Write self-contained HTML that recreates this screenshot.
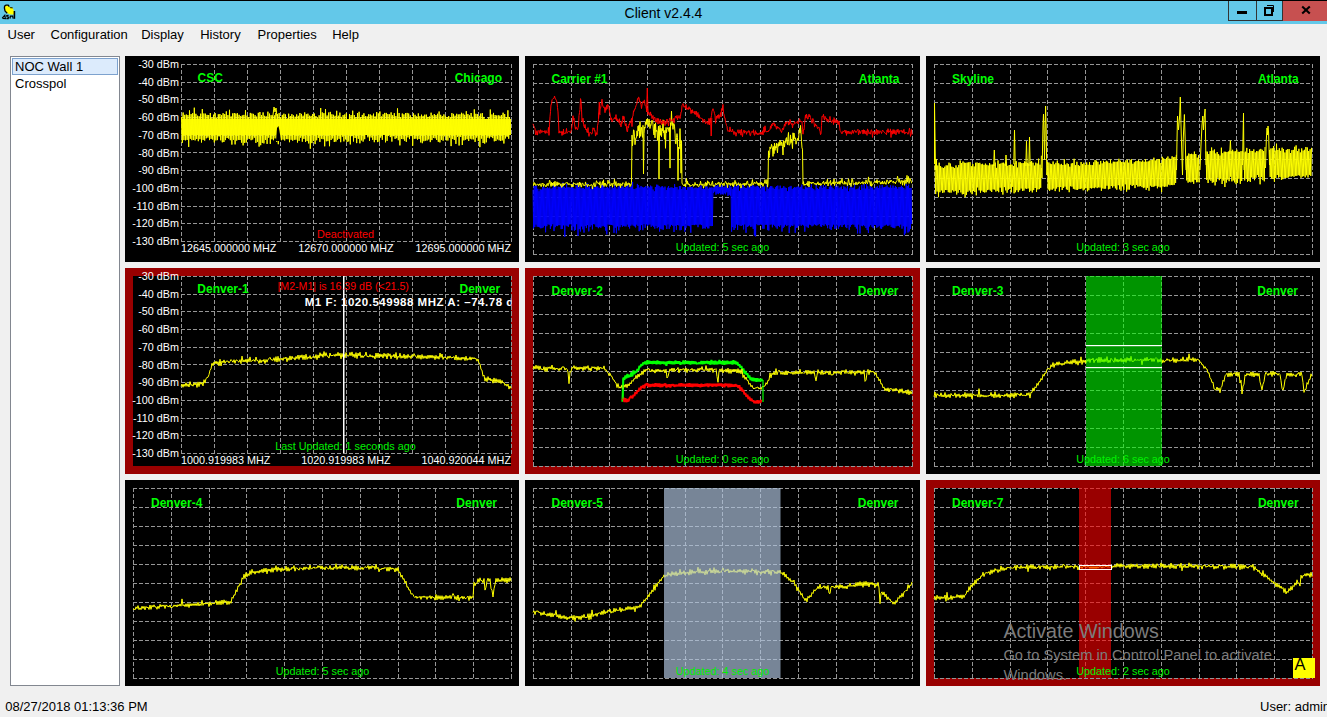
<!DOCTYPE html>
<html><head><meta charset="utf-8"><style>
html,body{margin:0;padding:0;}
body{width:1327px;height:717px;position:relative;overflow:hidden;background:#f0f0f0;font-family:"Liberation Sans",sans-serif;}
.tb{position:absolute;left:0;top:0;width:1327px;height:24px;background:#63c8e9;border-top:1px solid #000;box-sizing:border-box;}
.title{position:absolute;left:0;width:1327px;top:5px;text-align:center;font-size:14px;color:#000;line-height:16px;}
.btns{position:absolute;left:1228px;top:1px;height:20px;}
.b{position:absolute;top:0;height:20px;box-sizing:border-box;}
.menu{position:absolute;top:27.5px;font-size:13px;color:#000;line-height:13px;white-space:nowrap;}
.list{position:absolute;left:10px;top:56px;width:110px;height:630px;background:#fff;border:1px solid #828790;box-sizing:border-box;}
.sel{position:absolute;left:1px;top:1px;width:106px;height:17px;background:#dcebfc;border:1px solid #7da2ce;box-sizing:border-box;}
.li{position:absolute;left:4px;font-size:13px;line-height:13px;color:#000;}
svg.p{position:absolute;display:block;}
.lb{font-family:"Liberation Sans",sans-serif;font-weight:bold;font-size:12px;fill:#00ff00;}
.ax{font-family:"Liberation Sans",sans-serif;font-size:10.8px;fill:#fff;}
.up{font-family:"Liberation Sans",sans-serif;font-size:10.8px;fill:#00f000;}
.mk{font-family:"Liberation Sans",sans-serif;font-weight:bold;font-size:11.5px;letter-spacing:0.52px;fill:#fff;}
.wm1{font-family:"Liberation Sans",sans-serif;font-size:19.7px;fill:#7c7c7c;}
.wm2{font-family:"Liberation Sans",sans-serif;font-size:14.7px;fill:#7c7c7c;}
.akey{font-family:"Liberation Sans",sans-serif;font-size:16.5px;fill:#000;}
.status{position:absolute;top:700px;font-size:13px;line-height:13px;color:#000;white-space:nowrap;}
</style></head><body>
<div class="tb"></div>
<svg style="position:absolute;left:0px;top:0px" width="20" height="22" viewBox="0 0 20 22">
<path d="M4.6,6.2 L6,5.1 L8.2,5.2 L9.4,6.8 L12.4,7.4 L13.8,10.5 L14.4,14.6 L10.5,14.6 L7,13 L4.8,10.8 L4.3,8 Z" fill="#ffff00" stroke="none"/>
<path d="M7.2,13.2 L5,11 L4.4,8 L4.6,6.2 L6,5.1 L8.2,5.1 L9.3,6.6" fill="none" stroke="#000" stroke-width="1.3"/>
<path d="M9.5,7.3 L12.3,7.3 L13,8.3 L10.5,8.3 Z" fill="#000"/>
<path d="M14.4,11 L14.4,18.8" fill="none" stroke="#000" stroke-width="1.6"/>
<path d="M2.2,18.2 L4.8,15.3 L5.4,18.6 L2.5,18.4 M8.6,15.4 L6.8,15.6 L7,16.8 L8.6,17.2 L8.2,18.6 L6.4,18.6 M10,18.6 L10.4,16.2 L12.6,16.2 L13.2,18.6" fill="none" stroke="#000" stroke-width="1.2"/>
</svg>
<div class="title">Client v2.4.4</div>
<div class="btns">
 <div class="b" style="left:0;width:29px;border:1px solid #333;border-top:none;background:#63c8e9"></div>
 <div class="b" style="left:29px;width:26px;border:1px solid #333;border-top:none;border-left:none;background:#63c8e9"></div>
 <div class="b" style="left:55px;width:44px;background:#c75050;"></div>
</div>
<div style="position:absolute;left:1237px;top:11px;width:10px;height:3px;background:#000"></div>
<svg style="position:absolute;left:1262px;top:4px" width="14" height="12" viewBox="0 0 14 12">
<rect x="3" y="4" width="7" height="7" fill="none" stroke="#000" stroke-width="2"/>
<path d="M5,1.5 L11.5,1.5 L11.5,8" fill="none" stroke="#000" stroke-width="1"/>
</svg>
<svg style="position:absolute;left:1300px;top:5px" width="12" height="10" viewBox="0 0 12 10">
<path d="M2.2,1.5 L9.8,8.5 M9.8,1.5 L2.2,8.5" stroke="#000" stroke-width="2.1"/>
</svg>
<div class="menu" style="left:7.5px">User</div>
<div class="menu" style="left:50.5px">Configuration</div>
<div class="menu" style="left:141.2px">Display</div>
<div class="menu" style="left:200.2px">History</div>
<div class="menu" style="left:257.5px">Properties</div>
<div class="menu" style="left:332.2px">Help</div>
<div class="list"><div class="sel"></div>
<div class="li" style="top:3px">NOC Wall 1</div>
<div class="li" style="top:19.5px">Crosspol</div>
</div>
<svg class="p" style="left:125px;top:56px" width="394" height="206" viewBox="125 56 394 206"><rect x="125" y="56" width="394" height="206" fill="#000"/><rect x="133" y="64" width="378" height="190" fill="#000"/><rect x="133" y="64" width="378" height="190" fill="#000"/><g stroke="#969696" stroke-width="1" stroke-dasharray="4 2" shape-rendering="crispEdges"><line x1="181.5" y1="64" x2="181.5" y2="242"/><line x1="214.5" y1="64" x2="214.5" y2="242"/><line x1="247.5" y1="64" x2="247.5" y2="242"/><line x1="280.5" y1="64" x2="280.5" y2="242"/><line x1="313.5" y1="64" x2="313.5" y2="242"/><line x1="346.5" y1="64" x2="346.5" y2="242"/><line x1="379.5" y1="64" x2="379.5" y2="242"/><line x1="412.5" y1="64" x2="412.5" y2="242"/><line x1="445.5" y1="64" x2="445.5" y2="242"/><line x1="478.5" y1="64" x2="478.5" y2="242"/><line x1="511.5" y1="64" x2="511.5" y2="242"/><line x1="181" y1="64.5" x2="512" y2="64.5"/><line x1="181" y1="82.5" x2="512" y2="82.5"/><line x1="181" y1="99.5" x2="512" y2="99.5"/><line x1="181" y1="117.5" x2="512" y2="117.5"/><line x1="181" y1="135.5" x2="512" y2="135.5"/><line x1="181" y1="152.5" x2="512" y2="152.5"/><line x1="181" y1="170.5" x2="512" y2="170.5"/><line x1="181" y1="188.5" x2="512" y2="188.5"/><line x1="181" y1="206.5" x2="512" y2="206.5"/><line x1="181" y1="223.5" x2="512" y2="223.5"/><line x1="181" y1="241.5" x2="512" y2="241.5"/></g><text x="179" y="68.0" class="ax" text-anchor="end">-30 dBm</text><text x="179" y="85.7" class="ax" text-anchor="end">-40 dBm</text><text x="179" y="103.4" class="ax" text-anchor="end">-50 dBm</text><text x="179" y="121.1" class="ax" text-anchor="end">-60 dBm</text><text x="179" y="138.8" class="ax" text-anchor="end">-70 dBm</text><text x="179" y="156.5" class="ax" text-anchor="end">-80 dBm</text><text x="179" y="174.2" class="ax" text-anchor="end">-90 dBm</text><text x="179" y="191.9" class="ax" text-anchor="end">-100 dBm</text><text x="179" y="209.6" class="ax" text-anchor="end">-110 dBm</text><text x="179" y="227.3" class="ax" text-anchor="end">-120 dBm</text><text x="179" y="245.0" class="ax" text-anchor="end">-130 dBm</text><rect x="181.5" y="119" width="329.5" height="16" fill="#f0f000"/><polyline fill="none" stroke="#ffff00" stroke-width="1" stroke-linejoin="bevel"  points="181.5,116.8 182.3,142.9 183.1,112.5 183.9,140.1 184.7,114.9 185.5,140.3 186.3,114.5 187.1,139.9 187.9,115.1 188.7,146.9 189.5,110.4 190.3,138.8 191.1,114.1 191.9,140.2 192.7,113.2 193.5,140.0 194.3,107.7 195.1,140.4 195.9,113.8 196.7,139.0 197.5,115.7 198.3,141.2 199.1,116.2 199.9,139.2 200.7,113.7 201.5,142.5 202.3,109.1 203.1,139.9 203.9,113.5 204.7,140.6 205.5,113.7 206.3,138.3 207.1,114.9 207.9,137.6 208.7,115.0 209.5,140.1 210.3,113.0 211.1,138.9 211.9,117.6 212.7,139.6 213.5,114.7 214.3,142.4 215.1,113.1 215.9,140.4 216.7,117.6 217.5,140.1 218.3,114.3 219.1,136.4 219.9,114.0 220.7,140.3 221.5,115.2 222.3,142.3 223.1,113.2 223.9,142.0 224.7,114.1 225.5,140.1 226.3,111.4 227.1,138.0 227.9,115.1 228.7,138.6 229.5,109.8 230.3,140.2 231.1,116.4 231.9,144.6 232.7,113.4 233.5,139.8 234.3,113.0 235.1,144.4 235.9,113.5 236.7,140.6 237.5,113.3 238.3,139.9 239.1,114.8 239.9,140.0 240.7,116.0 241.5,142.6 242.3,115.4 243.1,145.4 243.9,114.9 244.7,142.9 245.5,110.2 246.3,142.5 247.1,115.6 247.9,138.8 248.7,117.3 249.5,138.8 250.3,112.9 251.1,140.2 251.9,113.5 252.7,139.5 253.5,113.9 254.3,137.7 255.1,115.2 255.9,142.9 256.7,116.6 257.5,141.8 258.3,112.8 259.1,146.6 259.9,112.0 260.7,145.2 261.5,115.1 262.3,142.9 263.1,112.4 263.9,143.4 264.7,115.8 265.5,139.9 266.3,116.4 267.1,143.9 267.9,111.7 268.7,137.7 269.5,113.6 270.3,143.9 271.1,115.2 271.9,139.3 272.7,115.2 273.5,140.2 274.3,115.3 275.1,138.4 275.9,112.8 276.7,141.8 277.5,114.1 278.3,144.2 279.1,113.1 279.9,140.4 280.7,117.2 281.5,140.2 282.3,114.9 283.1,139.6 283.9,113.7 284.7,140.5 285.5,114.5 286.3,139.1 287.1,118.4 287.9,139.2 288.7,113.7 289.5,142.2 290.3,116.0 291.1,139.8 291.9,114.2 292.7,140.7 293.5,115.4 294.3,139.8 295.1,116.7 295.9,139.7 296.7,114.4 297.5,142.5 298.3,115.8 299.1,140.8 299.9,113.0 300.7,137.7 301.5,113.9 302.3,141.7 303.1,115.7 303.9,138.9 304.7,112.4 305.5,141.9 306.3,114.2 307.1,141.1 307.9,113.7 308.7,143.4 309.5,115.7 310.3,148.7 311.1,115.9 311.9,143.1 312.7,114.1 313.5,140.9 314.3,113.5 315.1,144.1 315.9,116.0 316.7,140.3 317.5,117.4 318.3,137.9 319.1,115.3 319.9,141.9 320.7,108.0 321.5,138.7 322.3,112.4 323.1,139.2 323.9,113.2 324.7,146.3 325.5,109.1 326.3,141.3 327.1,115.5 327.9,141.1 328.7,112.5 329.5,146.2 330.3,111.9 331.1,140.0 331.9,114.3 332.7,138.5 333.5,114.8 334.3,142.0 335.1,115.8 335.9,141.6 336.7,110.8 337.5,139.7 338.3,115.7 339.1,138.8 339.9,112.6 340.7,142.2 341.5,116.9 342.3,136.7 343.1,115.1 343.9,141.4 344.7,114.5 345.5,139.3 346.3,113.2 347.1,142.0 347.9,119.4 348.7,141.4 349.5,114.1 350.3,144.4 351.1,115.1 351.9,136.2 352.7,110.7 353.5,141.5 354.3,115.1 355.1,138.0 355.9,117.3 356.7,143.1 357.5,113.0 358.3,138.8 359.1,111.8 359.9,143.3 360.7,117.0 361.5,140.4 362.3,114.9 363.1,141.6 363.9,113.3 364.7,139.2 365.5,116.2 366.3,135.0 367.1,116.4 367.9,137.3 368.7,114.3 369.5,140.9 370.3,114.5 371.1,137.5 371.9,115.5 372.7,139.8 373.5,113.7 374.3,142.2 375.1,116.4 375.9,140.0 376.7,112.0 377.5,142.1 378.3,113.4 379.1,141.8 379.9,111.5 380.7,137.6 381.5,116.5 382.3,139.8 383.1,114.3 383.9,134.1 384.7,112.9 385.5,142.3 386.3,112.9 387.1,140.9 387.9,114.1 388.7,135.7 389.5,114.4 390.3,137.1 391.1,112.4 391.9,141.6 392.7,115.2 393.5,136.2 394.3,113.2 395.1,138.9 395.9,116.1 396.7,138.2 397.5,108.4 398.3,140.2 399.1,113.0 399.9,145.4 400.7,117.1 401.5,139.0 402.3,113.5 403.1,139.2 403.9,114.4 404.7,140.8 405.5,113.0 406.3,141.8 407.1,112.9 407.9,137.4 408.7,113.5 409.5,139.1 410.3,115.4 411.1,136.1 411.9,117.2 412.7,145.8 413.5,113.4 414.3,138.8 415.1,114.8 415.9,138.7 416.7,116.4 417.5,139.6 418.3,113.4 419.1,139.0 419.9,116.3 420.7,142.4 421.5,114.7 422.3,143.2 423.1,115.9 423.9,141.2 424.7,114.7 425.5,140.6 426.3,114.6 427.1,140.5 427.9,116.9 428.7,139.4 429.5,116.5 430.3,142.1 431.1,112.7 431.9,140.1 432.7,115.4 433.5,138.0 434.3,114.1 435.1,138.3 435.9,115.1 436.7,140.0 437.5,113.8 438.3,141.8 439.1,111.5 439.9,142.4 440.7,114.8 441.5,139.8 442.3,116.1 443.1,140.7 443.9,114.4 444.7,136.3 445.5,115.9 446.3,140.4 447.1,117.0 447.9,140.5 448.7,116.0 449.5,137.6 450.3,117.0 451.1,146.1 451.9,113.1 452.7,139.0 453.5,113.9 454.3,139.9 455.1,115.7 455.9,143.9 456.7,113.8 457.5,136.8 458.3,114.5 459.1,145.5 459.9,114.3 460.7,136.9 461.5,112.8 462.3,145.0 463.1,113.6 463.9,140.4 464.7,114.8 465.5,139.7 466.3,111.2 467.1,139.2 467.9,114.1 468.7,141.0 469.5,115.4 470.3,138.7 471.1,113.0 471.9,139.4 472.7,116.8 473.5,139.3 474.3,109.4 475.1,141.9 475.9,113.8 476.7,137.6 477.5,114.2 478.3,141.1 479.1,115.9 479.9,147.1 480.7,113.6 481.5,138.6 482.3,113.1 483.1,143.0 483.9,116.9 484.7,143.6 485.5,119.1 486.3,142.3 487.1,118.8 487.9,137.7 488.7,117.4 489.5,138.3 490.3,109.5 491.1,137.1 491.9,114.5 492.7,138.1 493.5,112.9 494.3,141.3 495.1,115.0 495.9,141.0 496.7,115.5 497.5,139.3 498.3,115.3 499.1,140.3 499.9,115.6 500.7,141.0 501.5,115.1 502.3,140.4 503.1,112.7 503.9,143.5 504.7,114.1 505.5,138.4 506.3,117.0 507.1,136.8 507.9,110.3 508.7,138.7 509.5,117.0 510.3,133.5"/><polyline fill="none" stroke="#ffff00" points="273,115 274,107 275,112 276,108 277,116"/><polygon fill="#000" points="276,141 277,128 278.5,126 279.5,131 281,141"/><text x="181" y="251.5" class="ax">12645.000000 MHZ</text><text x="346" y="251.5" class="ax" text-anchor="middle">12670.000000 MHZ</text><text x="511" y="251.5" class="ax" text-anchor="end">12695.000000 MHZ</text><text x="345.5" y="238" class="up" style="fill:#ff0000" text-anchor="middle">Deactivated</text><text x="197.6" y="81.5" class="lb">CSC</text><text x="502" y="81.5" class="lb" text-anchor="end">Chicago</text></svg>
<svg class="p" style="left:525px;top:56px" width="395" height="206" viewBox="525 56 395 206"><rect x="525" y="56" width="395" height="206" fill="#000"/><rect x="533" y="64" width="379" height="190" fill="#000"/><g stroke="#969696" stroke-width="1" stroke-dasharray="4 2" shape-rendering="crispEdges"><line x1="533.5" y1="64" x2="533.5" y2="255"/><line x1="571.5" y1="64" x2="571.5" y2="255"/><line x1="609.5" y1="64" x2="609.5" y2="255"/><line x1="647.5" y1="64" x2="647.5" y2="255"/><line x1="685.5" y1="64" x2="685.5" y2="255"/><line x1="722.5" y1="64" x2="722.5" y2="255"/><line x1="760.5" y1="64" x2="760.5" y2="255"/><line x1="798.5" y1="64" x2="798.5" y2="255"/><line x1="836.5" y1="64" x2="836.5" y2="255"/><line x1="874.5" y1="64" x2="874.5" y2="255"/><line x1="912.5" y1="64" x2="912.5" y2="255"/><line x1="533" y1="64.5" x2="913" y2="64.5"/><line x1="533" y1="83.5" x2="913" y2="83.5"/><line x1="533" y1="102.5" x2="913" y2="102.5"/><line x1="533" y1="121.5" x2="913" y2="121.5"/><line x1="533" y1="140.5" x2="913" y2="140.5"/><line x1="533" y1="159.5" x2="913" y2="159.5"/><line x1="533" y1="178.5" x2="913" y2="178.5"/><line x1="533" y1="197.5" x2="913" y2="197.5"/><line x1="533" y1="216.5" x2="913" y2="216.5"/><line x1="533" y1="235.5" x2="913" y2="235.5"/><line x1="533" y1="254.5" x2="913" y2="254.5"/></g><polyline fill="none" stroke="#0000ff" stroke-width="1" stroke-linejoin="bevel"  points="533.0,189.8 533.6,228.4 534.2,186.0 534.8,227.0 535.4,185.9 536.0,224.6 536.6,185.6 537.2,226.7 537.8,188.8 538.4,226.8 539.0,191.3 539.6,227.3 540.2,189.1 540.8,228.3 541.4,189.6 542.0,228.1 542.6,187.1 543.2,227.4 543.8,186.4 544.4,225.7 545.0,188.3 545.6,232.3 546.2,188.2 546.8,226.2 547.4,187.2 548.0,224.3 548.6,188.4 549.2,224.7 549.8,187.5 550.4,228.9 551.0,189.0 551.6,226.2 552.2,188.1 552.8,224.2 553.4,184.2 554.0,231.1 554.6,183.2 555.2,227.2 555.8,185.6 556.4,225.7 557.0,189.3 557.6,226.1 558.2,186.7 558.8,225.1 559.4,187.1 560.0,225.2 560.6,184.1 561.2,229.1 561.8,186.8 562.4,228.9 563.0,182.5 563.6,225.3 564.2,186.9 564.8,236.8 565.4,187.9 566.0,225.4 566.6,183.8 567.2,226.2 567.8,187.4 568.4,226.8 569.0,187.3 569.6,224.3 570.2,187.8 570.8,224.2 571.4,187.5 572.0,230.4 572.6,183.5 573.2,226.6 573.8,188.3 574.4,230.8 575.0,188.8 575.6,229.8 576.2,185.7 576.8,224.2 577.4,183.0 578.0,235.9 578.6,187.6 579.2,229.1 579.8,186.4 580.4,231.5 581.0,188.6 581.6,226.4 582.2,188.1 582.8,229.3 583.4,188.2 584.0,232.6 584.6,188.9 585.2,226.1 585.8,185.6 586.4,228.1 587.0,183.0 587.6,225.1 588.2,187.1 588.8,231.4 589.4,186.5 590.0,226.8 590.6,188.9 591.2,225.2 591.8,186.9 592.4,229.4 593.0,188.1 593.6,224.1 594.2,187.5 594.8,224.3 595.4,186.5 596.0,226.7 596.6,186.6 597.2,227.1 597.8,186.4 598.4,228.2 599.0,188.1 599.6,227.1 600.2,187.5 600.8,227.7 601.4,185.1 602.0,226.3 602.6,183.4 603.2,225.8 603.8,185.9 604.4,226.8 605.0,188.2 605.6,230.6 606.2,187.6 606.8,234.3 607.4,187.2 608.0,224.4 608.6,188.4 609.2,224.7 609.8,186.7 610.4,224.7 611.0,189.5 611.6,224.9 612.2,186.8 612.8,225.3 613.4,188.2 614.0,232.8 614.6,184.7 615.2,227.7 615.8,187.4 616.4,233.3 617.0,189.2 617.6,226.3 618.2,187.2 618.8,230.4 619.4,185.4 620.0,227.2 620.6,187.8 621.2,225.1 621.8,186.6 622.4,226.8 623.0,186.5 623.6,225.7 624.2,187.9 624.8,226.3 625.4,187.4 626.0,226.4 626.6,186.6 627.2,224.5 627.8,184.2 628.4,226.8 629.0,188.2 629.6,228.5 630.2,187.0 630.8,225.7 631.4,186.3 632.0,224.5 632.6,181.9 633.2,225.6 633.8,188.9 634.4,226.3 635.0,189.2 635.6,227.4 636.2,188.2 636.8,224.6 637.4,183.9 638.0,225.9 638.6,185.1 639.2,231.2 639.8,187.6 640.4,229.8 641.0,186.1 641.6,225.1 642.2,186.9 642.8,230.2 643.4,187.6 644.0,224.1 644.6,187.2 645.2,227.8 645.8,186.1 646.4,224.3 647.0,188.2 647.6,226.0 648.2,186.2 648.8,224.7 649.4,187.5 650.0,224.4 650.6,185.6 651.2,226.8 651.8,186.5 652.4,225.5 653.0,189.5 653.6,226.7 654.2,191.3 654.8,228.6 655.4,187.0 656.0,225.9 656.6,184.7 657.2,228.2 657.8,184.8 658.4,227.1 659.0,186.0 659.6,231.5 660.2,187.4 660.8,228.8 661.4,186.6 662.0,229.3 662.6,186.3 663.2,229.8 663.8,187.6 664.4,225.1 665.0,186.6 665.6,225.4 666.2,190.1 666.8,229.0 667.4,187.7 668.0,224.4 668.6,186.0 669.2,228.8 669.8,188.0 670.4,226.5 671.0,187.4 671.6,224.8 672.2,187.6 672.8,225.8 673.4,188.2 674.0,232.0 674.6,184.1 675.2,225.8 675.8,187.1 676.4,229.9 677.0,187.2 677.6,225.0 678.2,189.6 678.8,225.4 679.4,186.0 680.0,230.3 680.6,186.1 681.2,229.9 681.8,189.0 682.4,226.2 683.0,187.3 683.6,225.8 684.2,187.0 684.8,231.7 685.4,186.7 686.0,227.8 686.6,189.9 687.2,225.5 687.8,187.3 688.4,225.7 689.0,187.2 689.6,226.2 690.2,186.9 690.8,232.7 691.4,187.0 692.0,225.0 692.6,186.9 693.2,224.8 693.8,188.5 694.4,225.1 695.0,187.8 695.6,224.5 696.2,187.6 696.8,224.7 697.4,188.3 698.0,227.2 698.6,187.5 699.2,224.5 699.8,186.9 700.4,224.4 701.0,185.4 701.6,225.1 702.2,189.0 702.8,228.7 703.4,187.7 704.0,228.1 704.6,189.2 705.2,228.6 705.8,186.3 706.4,226.7 707.0,186.5 707.6,228.3 708.2,188.7 708.8,228.4 709.4,187.5 710.0,225.9 710.6,187.7 711.2,226.1 711.8,187.4 712.4,226.0 713.0,187.9 713.6,192.9 714.2,184.9 714.8,191.6 715.4,185.2 716.0,194.7 716.6,186.1 717.2,193.6 717.8,185.2 718.4,194.1 719.0,186.9 719.6,193.1 720.2,186.8 720.8,194.5 721.4,185.5 722.0,194.1 722.6,186.8 723.2,194.6 723.8,187.1 724.4,193.3 725.0,186.6 725.6,194.3 726.2,185.3 726.8,192.3 727.4,186.5 728.0,195.9 728.6,188.1 729.2,194.8 729.8,185.3 730.4,195.7 731.0,187.1 731.6,231.7 732.2,189.2 732.8,227.1 733.4,185.3 734.0,230.0 734.6,184.9 735.2,228.1 735.8,186.6 736.4,224.4 737.0,186.0 737.6,229.9 738.2,183.3 738.8,224.9 739.4,190.8 740.0,225.6 740.6,187.5 741.2,226.0 741.8,187.2 742.4,225.2 743.0,184.2 743.6,229.4 744.2,187.2 744.8,224.4 745.4,187.9 746.0,232.8 746.6,187.9 747.2,227.0 747.8,186.2 748.4,226.2 749.0,187.1 749.6,225.3 750.2,184.1 750.8,226.9 751.4,186.7 752.0,226.5 752.6,184.9 753.2,228.9 753.8,185.7 754.4,235.5 755.0,186.9 755.6,236.4 756.2,186.4 756.8,224.2 757.4,185.8 758.0,225.2 758.6,186.8 759.2,225.1 759.8,188.2 760.4,224.4 761.0,188.3 761.6,224.7 762.2,186.1 762.8,228.7 763.4,187.3 764.0,228.8 764.6,186.5 765.2,224.8 765.8,191.4 766.4,224.6 767.0,184.8 767.6,230.1 768.2,188.9 768.8,230.5 769.4,187.5 770.0,224.7 770.6,186.0 771.2,224.4 771.8,186.2 772.4,227.3 773.0,187.7 773.6,224.6 774.2,189.0 774.8,225.8 775.4,187.3 776.0,227.3 776.6,186.1 777.2,228.7 777.8,185.6 778.4,225.8 779.0,189.4 779.6,226.9 780.2,185.7 780.8,225.2 781.4,188.4 782.0,231.6 782.6,187.9 783.2,227.9 783.8,186.2 784.4,226.6 785.0,187.5 785.6,224.6 786.2,188.0 786.8,226.0 787.4,191.3 788.0,225.0 788.6,187.2 789.2,233.1 789.8,186.6 790.4,227.0 791.0,185.9 791.6,225.4 792.2,189.1 792.8,226.0 793.4,187.9 794.0,224.5 794.6,187.2 795.2,232.8 795.8,187.6 796.4,227.8 797.0,186.9 797.6,227.5 798.2,186.5 798.8,226.0 799.4,187.6 800.0,224.4 800.6,186.9 801.2,225.7 801.8,184.7 802.4,224.6 803.0,188.7 803.6,225.4 804.2,189.3 804.8,231.7 805.4,186.6 806.0,226.2 806.6,187.6 807.2,227.3 807.8,187.7 808.4,227.8 809.0,186.7 809.6,224.5 810.2,187.3 810.8,225.1 811.4,184.4 812.0,226.3 812.6,188.4 813.2,225.5 813.8,189.2 814.4,224.3 815.0,190.3 815.6,225.1 816.2,185.0 816.8,225.6 817.4,188.1 818.0,224.8 818.6,189.0 819.2,224.0 819.8,186.9 820.4,226.3 821.0,185.3 821.6,226.8 822.2,187.9 822.8,225.0 823.4,185.1 824.0,225.8 824.6,187.0 825.2,224.1 825.8,185.6 826.4,225.4 827.0,189.1 827.6,228.2 828.2,189.0 828.8,225.0 829.4,186.9 830.0,228.9 830.6,184.0 831.2,230.0 831.8,186.7 832.4,226.7 833.0,188.2 833.6,224.5 834.2,189.4 834.8,228.9 835.4,185.6 836.0,228.5 836.6,187.0 837.2,225.3 837.8,185.9 838.4,228.8 839.0,188.3 839.6,226.5 840.2,187.3 840.8,225.1 841.4,186.6 842.0,227.0 842.6,189.2 843.2,225.0 843.8,186.3 844.4,224.3 845.0,187.2 845.6,227.1 846.2,188.5 846.8,228.1 847.4,184.8 848.0,224.9 848.6,191.4 849.2,229.8 849.8,188.4 850.4,226.7 851.0,183.7 851.6,224.9 852.2,187.8 852.8,224.3 853.4,187.7 854.0,224.7 854.6,183.1 855.2,226.9 855.8,189.5 856.4,228.5 857.0,189.2 857.6,233.4 858.2,188.5 858.8,224.5 859.4,186.6 860.0,233.5 860.6,190.1 861.2,225.7 861.8,185.0 862.4,226.2 863.0,188.4 863.6,225.2 864.2,184.0 864.8,226.2 865.4,188.7 866.0,228.0 866.6,184.1 867.2,230.1 867.8,186.4 868.4,233.0 869.0,188.9 869.6,226.5 870.2,185.3 870.8,225.0 871.4,187.6 872.0,226.8 872.6,187.6 873.2,228.2 873.8,189.7 874.4,224.8 875.0,188.3 875.6,225.0 876.2,186.9 876.8,227.7 877.4,186.4 878.0,226.8 878.6,188.1 879.2,225.7 879.8,185.4 880.4,228.4 881.0,188.4 881.6,228.8 882.2,185.0 882.8,227.1 883.4,187.5 884.0,225.7 884.6,187.1 885.2,225.3 885.8,186.7 886.4,224.5 887.0,185.5 887.6,225.7 888.2,187.3 888.8,225.6 889.4,187.7 890.0,224.7 890.6,185.4 891.2,226.9 891.8,187.8 892.4,227.5 893.0,185.6 893.6,227.7 894.2,187.8 894.8,228.2 895.4,186.1 896.0,226.3 896.6,187.0 897.2,225.8 897.8,188.8 898.4,225.8 899.0,187.0 899.6,227.2 900.2,187.1 900.8,224.5 901.4,185.8 902.0,228.7 902.6,187.1 903.2,226.2 903.8,188.0 904.4,235.2 905.0,189.5 905.6,233.4 906.2,184.0 906.8,226.6 907.4,186.1 908.0,232.5 908.6,184.7 909.2,231.4 909.8,188.0 910.4,228.9 911.0,187.9 911.6,224.0"/><polyline fill="none" stroke="#ffff00" stroke-width="1" stroke-linejoin="bevel"  points="533.0,185.5 533.5,185.4 534.0,182.3 534.5,184.4 535.0,183.3 535.5,185.3 536.0,185.6 536.5,185.1 537.0,184.2 537.5,184.1 538.0,184.8 538.5,185.6 539.0,184.2 539.5,185.1 540.0,183.6 540.5,185.8 541.0,186.7 541.5,186.3 542.0,183.2 542.5,183.8 543.0,183.1 543.5,186.5 544.0,184.5 544.5,184.5 545.0,185.2 545.5,186.0 546.0,186.9 546.5,184.7 547.0,183.6 547.5,183.7 548.0,185.8 548.5,183.5 549.0,184.1 549.5,180.2 550.0,180.8 550.5,183.8 551.0,186.5 551.5,182.4 552.0,185.6 552.5,183.0 553.0,185.6 553.5,184.6 554.0,182.0 554.5,186.7 555.0,181.2 555.5,186.2 556.0,185.5 556.5,185.1 557.0,181.8 557.5,185.4 558.0,182.5 558.5,184.5 559.0,182.9 559.5,183.3 560.0,184.7 560.5,185.6 561.0,183.7 561.5,187.2 562.0,187.3 562.5,186.4 563.0,183.1 563.5,185.6 564.0,184.1 564.5,185.0 565.0,183.1 565.5,183.3 566.0,182.5 566.5,182.7 567.0,182.5 567.5,182.6 568.0,184.7 568.5,184.4 569.0,183.4 569.5,184.5 570.0,184.4 570.5,184.6 571.0,185.2 571.5,184.5 572.0,186.9 572.5,184.5 573.0,186.8 573.5,182.7 574.0,183.1 574.5,183.8 575.0,183.3 575.5,184.1 576.0,185.0 576.5,183.9 577.0,184.1 577.5,184.4 578.0,182.8 578.5,186.9 579.0,185.6 579.5,182.1 580.0,185.2 580.5,182.8 581.0,186.9 581.5,186.9 582.0,183.7 582.5,182.9 583.0,183.9 583.5,184.7 584.0,185.8 584.5,185.1 585.0,185.7 585.5,181.9 586.0,184.2 586.5,184.6 587.0,184.4 587.5,186.8 588.0,184.2 588.5,184.6 589.0,185.7 589.5,185.6 590.0,185.2 590.5,185.5 591.0,184.4 591.5,184.8 592.0,184.7 592.5,189.1 593.0,185.6 593.5,185.1 594.0,182.7 594.5,186.1 595.0,187.0 595.5,186.1 596.0,183.0 596.5,180.7 597.0,182.5 597.5,182.7 598.0,182.5 598.5,184.0 599.0,183.1 599.5,184.9 600.0,181.6 600.5,187.8 601.0,185.7 601.5,184.5 602.0,183.2 602.5,181.5 603.0,185.2 603.5,179.8 604.0,186.5 604.5,183.1 605.0,184.7 605.5,183.4 606.0,186.3 606.5,186.4 607.0,184.2 607.5,183.7 608.0,180.1 608.5,183.1 609.0,183.6 609.5,181.8 610.0,183.6 610.5,186.0 611.0,185.1 611.5,184.2 612.0,183.2 612.5,187.2 613.0,183.5 613.5,183.4 614.0,183.5 614.5,179.2 615.0,185.5 615.5,184.2 616.0,181.6 616.5,186.7 617.0,185.0 617.5,185.2 618.0,183.1 618.5,183.4 619.0,185.8 619.5,184.3 620.0,183.3 620.5,187.6 621.0,183.9 621.5,184.9 622.0,185.6 622.5,182.9 623.0,183.3 623.5,182.8 624.0,183.4 624.5,184.3 625.0,186.8 625.5,185.5 626.0,181.6 626.5,185.3 627.0,185.9 627.5,183.7 628.0,183.7 628.5,182.8 629.0,184.8 629.5,183.4 630.0,186.8 630.5,184.5 631.0,185.4 631.5,182.3 632.0,135.1 632.5,145.8 633.0,139.8 633.5,129.9 634.0,130.2 634.5,136.9 635.0,144.7 635.5,140.3 636.0,137.6 636.5,137.7 637.0,130.8 637.5,136.1 638.0,126.1 638.5,131.0 639.0,125.1 639.5,137.8 640.0,121.4 640.5,136.3 641.0,129.4 641.5,127.3 642.0,134.6 642.5,137.4 643.0,125.3 643.5,174.0 644.0,133.7 644.5,127.0 645.0,128.2 645.5,121.7 646.0,124.4 646.5,119.4 647.0,124.5 647.5,118.7 648.0,123.5 648.5,126.6 649.0,119.1 649.5,122.5 650.0,128.5 650.5,124.7 651.0,125.3 651.5,120.6 652.0,120.3 652.5,120.6 653.0,124.4 653.5,131.9 654.0,135.0 654.5,124.0 655.0,137.9 655.5,122.8 656.0,131.8 656.5,130.1 657.0,131.0 657.5,140.5 658.0,132.3 658.5,126.1 659.0,179.1 659.5,131.0 660.0,125.4 660.5,135.3 661.0,128.1 661.5,136.7 662.0,129.3 662.5,130.8 663.0,119.8 663.5,132.7 664.0,130.9 664.5,139.2 665.0,130.2 665.5,148.3 666.0,127.4 666.5,132.8 667.0,129.4 667.5,129.0 668.0,127.4 668.5,128.9 669.0,131.7 669.5,127.4 670.0,168.1 670.5,122.8 671.0,123.7 671.5,111.1 672.0,125.5 672.5,122.5 673.0,129.4 673.5,123.6 674.0,123.5 674.5,126.1 675.0,133.1 675.5,143.6 676.0,144.1 676.5,137.5 677.0,133.6 677.5,137.2 678.0,180.4 678.5,147.0 679.0,149.1 679.5,146.8 680.0,128.6 680.5,143.8 681.0,173.2 681.5,140.6 682.0,183.1 682.5,184.2 683.0,184.3 683.5,185.5 684.0,185.0 684.5,185.9 685.0,183.8 685.5,187.0 686.0,184.4 686.5,178.5 687.0,183.9 687.5,181.2 688.0,184.4 688.5,183.6 689.0,184.9 689.5,184.0 690.0,186.6 690.5,185.6 691.0,185.0 691.5,185.5 692.0,185.0 692.5,184.9 693.0,184.1 693.5,186.3 694.0,186.0 694.5,185.3 695.0,182.4 695.5,184.8 696.0,184.7 696.5,184.2 697.0,185.4 697.5,184.0 698.0,186.4 698.5,186.5 699.0,186.5 699.5,184.1 700.0,185.0 700.5,181.2 701.0,183.3 701.5,185.1 702.0,185.2 702.5,185.3 703.0,183.8 703.5,188.1 704.0,185.9 704.5,185.7 705.0,183.5 705.5,182.4 706.0,186.3 706.5,182.9 707.0,185.3 707.5,180.8 708.0,183.4 708.5,181.9 709.0,182.0 709.5,184.8 710.0,185.1 710.5,184.7 711.0,185.5 711.5,184.6 712.0,182.4 712.5,181.1 713.0,185.7 713.5,184.9 714.0,186.7 714.5,185.6 715.0,185.5 715.5,183.4 716.0,184.0 716.5,184.7 717.0,183.6 717.5,182.8 718.0,184.3 718.5,182.3 719.0,182.0 719.5,183.8 720.0,186.8 720.5,183.4 721.0,182.7 721.5,182.6 722.0,184.1 722.5,184.8 723.0,183.9 723.5,183.1 724.0,185.7 724.5,183.6 725.0,182.8 725.5,181.4 726.0,181.9 726.5,184.2 727.0,183.3 727.5,187.6 728.0,183.4 728.5,182.7 729.0,184.4 729.5,184.3 730.0,183.0 730.5,185.5 731.0,184.1 731.5,184.1 732.0,183.4 732.5,185.7 733.0,182.4 733.5,186.8 734.0,184.5 734.5,184.3 735.0,180.4 735.5,183.5 736.0,182.5 736.5,185.9 737.0,184.1 737.5,184.1 738.0,184.9 738.5,182.7 739.0,183.8 739.5,185.7 740.0,183.9 740.5,183.6 741.0,188.1 741.5,185.5 742.0,183.9 742.5,184.1 743.0,184.1 743.5,184.5 744.0,183.1 744.5,185.8 745.0,183.2 745.5,183.6 746.0,185.2 746.5,183.0 747.0,181.5 747.5,180.9 748.0,184.4 748.5,184.6 749.0,184.3 749.5,187.2 750.0,183.9 750.5,184.2 751.0,185.9 751.5,184.3 752.0,182.0 752.5,179.6 753.0,185.1 753.5,183.8 754.0,183.0 754.5,182.2 755.0,183.7 755.5,183.2 756.0,182.9 756.5,181.5 757.0,183.6 757.5,182.7 758.0,184.9 758.5,183.0 759.0,185.8 759.5,183.2 760.0,182.8 760.5,183.9 761.0,182.0 761.5,184.8 762.0,183.0 762.5,184.9 763.0,186.4 763.5,183.6 764.0,183.6 764.5,183.2 765.0,179.6 765.5,182.9 766.0,183.8 766.5,183.6 767.0,179.5 767.5,187.1 768.0,183.5 768.5,150.8 769.0,157.7 769.5,155.6 770.0,146.9 770.5,148.9 771.0,148.1 771.5,144.3 772.0,146.2 772.5,147.7 773.0,156.4 773.5,146.5 774.0,153.7 774.5,143.0 775.0,150.4 775.5,146.5 776.0,148.0 776.5,143.2 777.0,148.8 777.5,152.9 778.0,143.7 778.5,146.3 779.0,142.3 779.5,145.6 780.0,140.1 780.5,142.4 781.0,145.7 781.5,141.9 782.0,143.0 782.5,146.7 783.0,155.0 783.5,140.6 784.0,144.1 784.5,147.1 785.0,141.1 785.5,142.5 786.0,138.7 786.5,137.6 787.0,142.6 787.5,144.7 788.0,136.8 788.5,132.4 789.0,145.2 789.5,144.8 790.0,144.4 790.5,134.9 791.0,142.6 791.5,139.2 792.0,143.0 792.5,148.6 793.0,132.8 793.5,140.1 794.0,133.1 794.5,137.0 795.0,139.2 795.5,137.8 796.0,144.2 796.5,141.3 797.0,140.3 797.5,138.4 798.0,140.3 798.5,140.4 799.0,132.5 799.5,128.5 800.0,133.1 800.5,125.4 801.0,132.6 801.5,141.4 802.0,147.9 802.5,149.2 803.0,184.1 803.5,181.6 804.0,185.3 804.5,184.0 805.0,185.2 805.5,184.0 806.0,184.9 806.5,183.7 807.0,182.8 807.5,185.6 808.0,181.2 808.5,183.8 809.0,187.0 809.5,181.6 810.0,182.5 810.5,182.9 811.0,182.1 811.5,184.0 812.0,183.2 812.5,182.1 813.0,183.1 813.5,182.4 814.0,183.1 814.5,184.2 815.0,183.3 815.5,183.6 816.0,185.0 816.5,185.0 817.0,183.0 817.5,183.8 818.0,181.8 818.5,184.8 819.0,183.8 819.5,185.0 820.0,183.1 820.5,185.3 821.0,185.4 821.5,184.1 822.0,183.7 822.5,182.5 823.0,183.4 823.5,181.2 824.0,182.4 824.5,184.6 825.0,184.0 825.5,182.3 826.0,182.3 826.5,183.7 827.0,180.9 827.5,179.2 828.0,186.0 828.5,182.9 829.0,182.8 829.5,183.3 830.0,181.6 830.5,180.4 831.0,185.3 831.5,184.3 832.0,183.0 832.5,183.4 833.0,181.8 833.5,183.9 834.0,179.0 834.5,185.6 835.0,183.9 835.5,181.8 836.0,182.6 836.5,182.0 837.0,182.6 837.5,184.0 838.0,181.6 838.5,182.0 839.0,184.1 839.5,181.5 840.0,184.3 840.5,180.8 841.0,182.7 841.5,181.8 842.0,178.6 842.5,183.2 843.0,183.5 843.5,184.0 844.0,184.2 844.5,181.2 845.0,184.3 845.5,182.5 846.0,183.2 846.5,182.8 847.0,183.9 847.5,185.7 848.0,182.1 848.5,178.8 849.0,181.2 849.5,184.9 850.0,183.4 850.5,183.4 851.0,186.7 851.5,182.7 852.0,178.7 852.5,179.4 853.0,182.6 853.5,184.7 854.0,184.5 854.5,184.1 855.0,183.3 855.5,184.6 856.0,181.9 856.5,184.4 857.0,184.1 857.5,184.5 858.0,182.6 858.5,183.8 859.0,181.7 859.5,182.5 860.0,182.9 860.5,184.0 861.0,182.6 861.5,182.9 862.0,181.9 862.5,181.8 863.0,184.2 863.5,183.8 864.0,181.8 864.5,182.3 865.0,183.2 865.5,184.0 866.0,179.8 866.5,182.3 867.0,182.7 867.5,183.7 868.0,181.0 868.5,176.9 869.0,181.5 869.5,180.9 870.0,183.4 870.5,185.9 871.0,181.4 871.5,186.3 872.0,185.4 872.5,184.1 873.0,183.5 873.5,183.1 874.0,182.8 874.5,182.0 875.0,181.4 875.5,182.5 876.0,180.9 876.5,182.7 877.0,179.6 877.5,183.4 878.0,181.5 878.5,182.0 879.0,180.9 879.5,181.1 880.0,182.3 880.5,184.1 881.0,182.3 881.5,182.2 882.0,184.1 882.5,181.0 883.0,183.6 883.5,183.7 884.0,182.4 884.5,181.5 885.0,183.7 885.5,182.8 886.0,184.4 886.5,180.7 887.0,179.8 887.5,181.2 888.0,181.3 888.5,183.8 889.0,182.1 889.5,183.0 890.0,180.3 890.5,182.0 891.0,180.1 891.5,180.5 892.0,181.6 892.5,182.3 893.0,182.1 893.5,181.1 894.0,183.2 894.5,182.7 895.0,182.2 895.5,183.7 896.0,181.6 896.5,181.5 897.0,180.7 897.5,176.2 898.0,178.4 898.5,178.8 899.0,182.3 899.5,179.3 900.0,181.0 900.5,183.7 901.0,182.0 901.5,180.6 902.0,180.6 902.5,185.2 903.0,180.6 903.5,182.1 904.0,181.1 904.5,185.4 905.0,179.6 905.5,181.8 906.0,183.6 906.5,181.2 907.0,175.4 907.5,182.1 908.0,178.0 908.5,176.5 909.0,183.4 909.5,180.8 910.0,178.2 910.5,180.5 911.0,180.3 911.5,182.9 912.0,182.8"/><polyline fill="none" stroke="#ff0000" stroke-width="1" stroke-linejoin="bevel"  points="533.0,123.8 533.5,125.4 534.0,126.1 534.5,127.9 535.0,128.2 535.5,134.0 536.0,135.0 536.5,131.8 537.0,130.6 537.5,135.1 538.0,131.8 538.5,130.9 539.0,130.3 539.5,131.9 540.0,133.5 540.5,129.8 541.0,130.0 541.5,132.3 542.0,132.6 542.5,130.9 543.0,130.9 543.5,131.6 544.0,131.8 544.5,130.7 545.0,133.4 545.5,133.2 546.0,130.5 546.5,132.7 547.0,133.2 547.5,132.7 548.0,131.8 548.5,127.4 549.0,135.4 549.5,124.9 550.0,116.8 550.5,111.6 551.0,104.4 551.5,104.4 552.0,99.8 552.5,99.3 553.0,98.6 553.5,98.5 554.0,98.4 554.5,96.0 555.0,97.8 555.5,98.8 556.0,99.9 556.5,100.6 557.0,103.0 557.5,107.4 558.0,111.9 558.5,121.8 559.0,133.2 559.5,130.9 560.0,132.5 560.5,131.7 561.0,132.7 561.5,131.5 562.0,135.5 562.5,131.6 563.0,134.8 563.5,129.1 564.0,134.1 564.5,133.7 565.0,133.0 565.5,133.4 566.0,131.7 566.5,128.4 567.0,133.3 567.5,132.5 568.0,131.9 568.5,131.3 569.0,131.4 569.5,131.4 570.0,132.0 570.5,133.1 571.0,131.0 571.5,129.3 572.0,125.1 572.5,123.3 573.0,115.7 573.5,120.2 574.0,118.1 574.5,124.1 575.0,126.9 575.5,129.3 576.0,126.9 576.5,127.8 577.0,129.1 577.5,129.8 578.0,127.8 578.5,125.9 579.0,115.6 579.5,112.5 580.0,109.5 580.5,98.6 581.0,100.7 581.5,109.2 582.0,121.6 582.5,121.8 583.0,118.2 583.5,124.5 584.0,126.3 584.5,127.9 585.0,124.4 585.5,128.1 586.0,129.9 586.5,129.0 587.0,132.5 587.5,132.4 588.0,127.6 588.5,133.6 589.0,136.4 589.5,133.5 590.0,132.2 590.5,132.4 591.0,133.2 591.5,134.1 592.0,133.9 592.5,131.5 593.0,127.8 593.5,129.2 594.0,127.9 594.5,131.2 595.0,130.6 595.5,136.1 596.0,134.6 596.5,132.7 597.0,134.6 597.5,125.8 598.0,123.5 598.5,119.5 599.0,112.8 599.5,113.9 600.0,109.5 600.5,108.3 601.0,105.8 601.5,102.2 602.0,99.2 602.5,104.8 603.0,106.3 603.5,107.5 604.0,106.8 604.5,107.3 605.0,112.7 605.5,107.6 606.0,110.3 606.5,105.5 607.0,109.1 607.5,104.5 608.0,104.9 608.5,105.3 609.0,107.2 609.5,111.9 610.0,113.7 610.5,117.3 611.0,120.0 611.5,117.8 612.0,121.8 612.5,120.8 613.0,119.6 613.5,119.0 614.0,119.1 614.5,117.6 615.0,119.1 615.5,119.0 616.0,114.6 616.5,120.6 617.0,118.6 617.5,121.2 618.0,119.6 618.5,121.5 619.0,122.7 619.5,118.7 620.0,124.7 620.5,123.9 621.0,126.9 621.5,121.5 622.0,123.4 622.5,119.6 623.0,115.9 623.5,119.4 624.0,116.5 624.5,121.6 625.0,123.8 625.5,126.0 626.0,123.6 626.5,128.0 627.0,131.4 627.5,131.9 628.0,126.2 628.5,128.0 629.0,124.2 629.5,125.0 630.0,121.6 630.5,122.7 631.0,121.2 631.5,118.4 632.0,126.6 632.5,116.8 633.0,116.0 633.5,110.8 634.0,111.3 634.5,109.2 635.0,109.4 635.5,107.4 636.0,105.7 636.5,104.7 637.0,103.1 637.5,98.6 638.0,99.3 638.5,97.2 639.0,97.4 639.5,101.8 640.0,101.0 640.5,102.8 641.0,104.5 641.5,108.6 642.0,105.0 642.5,102.1 643.0,101.5 643.5,102.6 644.0,100.5 644.5,100.1 645.0,105.1 645.5,106.1 646.0,106.6 646.5,109.7 647.0,108.6 647.5,108.4 648.0,114.7 648.5,112.0 649.0,112.7 649.5,113.8 650.0,115.7 650.5,111.9 651.0,115.0 651.5,114.4 652.0,118.6 652.5,116.1 653.0,115.5 653.5,120.4 654.0,118.4 654.5,117.0 655.0,117.9 655.5,121.8 656.0,120.3 656.5,122.3 657.0,118.1 657.5,118.8 658.0,124.1 658.5,118.6 659.0,120.2 659.5,123.2 660.0,123.4 660.5,119.0 661.0,122.0 661.5,124.6 662.0,122.7 662.5,120.3 663.0,123.8 663.5,121.5 664.0,121.8 664.5,120.3 665.0,125.6 665.5,121.7 666.0,124.2 666.5,122.3 667.0,119.0 667.5,121.7 668.0,123.0 668.5,125.9 669.0,121.7 669.5,118.3 670.0,118.0 670.5,120.4 671.0,120.8 671.5,121.3 672.0,119.7 672.5,120.5 673.0,121.2 673.5,118.5 674.0,123.2 674.5,119.2 675.0,117.9 675.5,116.0 676.0,117.5 676.5,117.9 677.0,115.4 677.5,119.8 678.0,117.0 678.5,117.5 679.0,115.5 679.5,116.5 680.0,118.6 680.5,116.3 681.0,111.9 681.5,111.8 682.0,105.2 682.5,104.9 683.0,103.6 683.5,104.4 684.0,107.2 684.5,106.2 685.0,106.7 685.5,108.5 686.0,104.4 686.5,109.2 687.0,109.7 687.5,108.0 688.0,108.1 688.5,109.5 689.0,106.7 689.5,108.8 690.0,108.5 690.5,108.3 691.0,113.6 691.5,110.2 692.0,113.2 692.5,109.7 693.0,112.6 693.5,112.1 694.0,111.7 694.5,114.2 695.0,111.0 695.5,114.2 696.0,114.7 696.5,111.4 697.0,116.7 697.5,113.2 698.0,112.5 698.5,117.6 699.0,114.6 699.5,117.1 700.0,118.5 700.5,117.7 701.0,118.3 701.5,118.4 702.0,118.9 702.5,118.8 703.0,122.5 703.5,119.7 704.0,120.4 704.5,119.3 705.0,120.9 705.5,123.8 706.0,123.3 706.5,122.0 707.0,121.3 707.5,123.2 708.0,124.5 708.5,123.1 709.0,118.3 709.5,125.0 710.0,119.2 710.5,122.3 711.0,118.0 711.5,115.6 712.0,111.1 712.5,110.0 713.0,108.7 713.5,110.3 714.0,111.5 714.5,113.7 715.0,115.0 715.5,123.3 716.0,119.9 716.5,116.0 717.0,118.4 717.5,115.3 718.0,117.4 718.5,114.6 719.0,118.6 719.5,115.6 720.0,115.9 720.5,112.6 721.0,117.0 721.5,108.6 722.0,110.8 722.5,107.2 723.0,104.4 723.5,113.2 724.0,114.2 724.5,117.8 725.0,117.7 725.5,122.2 726.0,123.4 726.5,125.5 727.0,126.2 727.5,130.5 728.0,131.4 728.5,130.8 729.0,130.5 729.5,131.8 730.0,126.9 730.5,131.1 731.0,130.9 731.5,131.8 732.0,130.7 732.5,129.0 733.0,132.0 733.5,131.8 734.0,134.6 734.5,131.7 735.0,132.0 735.5,132.5 736.0,136.2 736.5,133.0 737.0,132.7 737.5,131.7 738.0,129.7 738.5,133.3 739.0,132.7 739.5,133.2 740.0,129.8 740.5,133.4 741.0,135.2 741.5,129.3 742.0,133.6 742.5,136.7 743.0,132.7 743.5,131.9 744.0,130.0 744.5,133.2 745.0,130.8 745.5,131.5 746.0,131.2 746.5,134.3 747.0,132.1 747.5,131.8 748.0,132.5 748.5,130.8 749.0,130.5 749.5,131.1 750.0,135.6 750.5,135.7 751.0,132.9 751.5,132.2 752.0,131.2 752.5,131.7 753.0,132.7 753.5,129.7 754.0,134.4 754.5,135.4 755.0,132.6 755.5,130.7 756.0,134.3 756.5,132.6 757.0,133.9 757.5,134.7 758.0,133.2 758.5,134.4 759.0,134.7 759.5,132.8 760.0,133.6 760.5,132.1 761.0,134.6 761.5,132.5 762.0,133.9 762.5,130.8 763.0,134.9 763.5,129.7 764.0,126.9 764.5,132.3 765.0,125.8 765.5,130.7 766.0,131.9 766.5,131.7 767.0,132.1 767.5,131.0 768.0,132.0 768.5,130.5 769.0,130.5 769.5,130.2 770.0,129.8 770.5,125.9 771.0,128.4 771.5,124.4 772.0,126.0 772.5,123.1 773.0,123.9 773.5,124.1 774.0,122.6 774.5,126.2 775.0,124.1 775.5,125.6 776.0,127.3 776.5,129.2 777.0,126.2 777.5,128.0 778.0,128.2 778.5,127.3 779.0,128.4 779.5,127.9 780.0,129.1 780.5,130.9 781.0,130.9 781.5,132.5 782.0,130.7 782.5,128.2 783.0,129.6 783.5,129.5 784.0,126.6 784.5,124.2 785.0,126.3 785.5,122.0 786.0,124.2 786.5,122.1 787.0,122.2 787.5,121.9 788.0,121.7 788.5,125.1 789.0,122.2 789.5,124.3 790.0,119.5 790.5,121.9 791.0,123.8 791.5,124.5 792.0,123.2 792.5,128.0 793.0,124.0 793.5,124.7 794.0,124.5 794.5,121.5 795.0,123.5 795.5,122.9 796.0,122.9 796.5,122.7 797.0,121.5 797.5,121.1 798.0,123.9 798.5,122.5 799.0,121.5 799.5,118.6 800.0,120.2 800.5,122.0 801.0,121.3 801.5,122.1 802.0,121.5 802.5,129.4 803.0,134.2 803.5,129.6 804.0,130.0 804.5,124.3 805.0,119.0 805.5,114.9 806.0,118.1 806.5,114.2 807.0,116.1 807.5,119.0 808.0,119.1 808.5,117.5 809.0,114.2 809.5,116.7 810.0,115.5 810.5,117.6 811.0,119.8 811.5,120.5 812.0,123.3 812.5,118.8 813.0,118.4 813.5,119.7 814.0,122.7 814.5,127.1 815.0,125.1 815.5,123.8 816.0,125.9 816.5,125.0 817.0,126.7 817.5,128.5 818.0,127.7 818.5,127.4 819.0,127.1 819.5,130.3 820.0,131.1 820.5,134.7 821.0,133.9 821.5,125.5 822.0,116.4 822.5,116.9 823.0,116.0 823.5,114.3 824.0,118.6 824.5,120.1 825.0,116.3 825.5,117.2 826.0,119.1 826.5,118.4 827.0,121.4 827.5,119.4 828.0,119.6 828.5,122.3 829.0,120.0 829.5,118.6 830.0,116.4 830.5,120.4 831.0,121.4 831.5,122.6 832.0,120.9 832.5,121.4 833.0,119.7 833.5,124.5 834.0,117.6 834.5,118.6 835.0,123.0 835.5,120.1 836.0,119.4 836.5,122.3 837.0,123.0 837.5,120.2 838.0,124.7 838.5,122.8 839.0,120.9 839.5,126.0 840.0,130.4 840.5,131.1 841.0,131.8 841.5,133.5 842.0,132.8 842.5,133.4 843.0,130.9 843.5,131.5 844.0,131.8 844.5,130.4 845.0,130.1 845.5,133.1 846.0,130.4 846.5,135.4 847.0,131.0 847.5,131.7 848.0,133.8 848.5,131.1 849.0,132.0 849.5,133.5 850.0,131.6 850.5,132.4 851.0,134.3 851.5,134.0 852.0,131.2 852.5,130.2 853.0,133.4 853.5,133.1 854.0,130.5 854.5,130.2 855.0,131.5 855.5,131.1 856.0,132.6 856.5,131.1 857.0,130.6 857.5,130.2 858.0,129.3 858.5,134.8 859.0,133.8 859.5,130.4 860.0,132.1 860.5,133.4 861.0,131.4 861.5,130.8 862.0,130.9 862.5,130.1 863.0,134.1 863.5,129.7 864.0,133.2 864.5,130.1 865.0,134.1 865.5,133.7 866.0,130.8 866.5,132.4 867.0,135.4 867.5,128.9 868.0,130.4 868.5,130.6 869.0,133.8 869.5,132.6 870.0,133.6 870.5,134.0 871.0,130.2 871.5,129.8 872.0,132.5 872.5,137.4 873.0,131.1 873.5,131.5 874.0,133.2 874.5,134.6 875.0,131.6 875.5,133.7 876.0,131.4 876.5,129.0 877.0,134.7 877.5,130.7 878.0,130.0 878.5,132.1 879.0,133.7 879.5,132.2 880.0,130.7 880.5,131.2 881.0,132.0 881.5,133.5 882.0,131.7 882.5,130.0 883.0,130.9 883.5,131.3 884.0,131.6 884.5,132.7 885.0,132.7 885.5,133.5 886.0,133.9 886.5,134.7 887.0,130.2 887.5,132.1 888.0,128.7 888.5,132.5 889.0,130.8 889.5,131.7 890.0,131.6 890.5,128.9 891.0,137.5 891.5,131.0 892.0,131.0 892.5,134.2 893.0,129.6 893.5,133.4 894.0,129.7 894.5,133.6 895.0,130.4 895.5,132.7 896.0,134.8 896.5,131.7 897.0,129.7 897.5,132.2 898.0,129.2 898.5,132.7 899.0,133.7 899.5,131.0 900.0,130.3 900.5,131.3 901.0,130.7 901.5,130.4 902.0,132.3 902.5,130.8 903.0,133.1 903.5,129.9 904.0,129.3 904.5,133.9 905.0,133.9 905.5,132.4 906.0,132.8 906.5,132.1 907.0,132.9 907.5,133.0 908.0,134.3 908.5,133.6 909.0,130.6 909.5,128.0 910.0,131.7 910.5,136.4 911.0,133.6 911.5,129.5 912.0,134.8"/><polyline fill="none" stroke="#ff0000" points="646.5,112 647.3,88 648,112"/><polyline fill="none" stroke="#ff0000" points="598.5,118 599.3,102 600,115"/><polyline fill="none" stroke="#ff0000" points="710.5,118 711.2,136 711.8,118"/><text x="551.5" y="83" class="lb">Carrier #1</text><text x="899.4" y="83" class="lb" text-anchor="end">Atlanta</text><text x="722.5" y="251" class="up" text-anchor="middle">Updated: 5 sec ago</text></svg>
<svg class="p" style="left:926px;top:56px" width="394" height="206" viewBox="926 56 394 206"><rect x="926" y="56" width="394" height="206" fill="#000"/><rect x="934" y="64" width="378" height="190" fill="#000"/><g stroke="#969696" stroke-width="1" stroke-dasharray="4 2" shape-rendering="crispEdges"><line x1="934.5" y1="64" x2="934.5" y2="255"/><line x1="972.5" y1="64" x2="972.5" y2="255"/><line x1="1010.5" y1="64" x2="1010.5" y2="255"/><line x1="1047.5" y1="64" x2="1047.5" y2="255"/><line x1="1085.5" y1="64" x2="1085.5" y2="255"/><line x1="1123.5" y1="64" x2="1123.5" y2="255"/><line x1="1161.5" y1="64" x2="1161.5" y2="255"/><line x1="1199.5" y1="64" x2="1199.5" y2="255"/><line x1="1236.5" y1="64" x2="1236.5" y2="255"/><line x1="1274.5" y1="64" x2="1274.5" y2="255"/><line x1="1312.5" y1="64" x2="1312.5" y2="255"/><line x1="934" y1="64.5" x2="1313" y2="64.5"/><line x1="934" y1="83.5" x2="1313" y2="83.5"/><line x1="934" y1="102.5" x2="1313" y2="102.5"/><line x1="934" y1="121.5" x2="1313" y2="121.5"/><line x1="934" y1="140.5" x2="1313" y2="140.5"/><line x1="934" y1="159.5" x2="1313" y2="159.5"/><line x1="934" y1="178.5" x2="1313" y2="178.5"/><line x1="934" y1="197.5" x2="1313" y2="197.5"/><line x1="934" y1="216.5" x2="1313" y2="216.5"/><line x1="934" y1="235.5" x2="1313" y2="235.5"/><line x1="934" y1="254.5" x2="1313" y2="254.5"/></g><polyline fill="none" stroke="#ffff00" stroke-width="1" stroke-linejoin="bevel"  points="935.0,165.1 935.7,194.0 936.4,159.2 937.1,191.5 937.8,165.5 938.5,197.2 939.2,162.7 939.9,192.2 940.6,166.2 941.3,190.4 942.0,167.4 942.7,192.9 943.4,168.0 944.1,192.4 944.8,166.7 945.5,190.0 946.2,165.4 946.9,190.1 947.6,165.5 948.3,192.2 949.0,162.7 949.7,192.5 950.4,163.6 951.1,192.6 951.8,166.7 952.5,190.2 953.2,167.1 953.9,191.5 954.6,168.1 955.3,190.8 956.0,165.4 956.7,194.5 957.4,167.5 958.1,192.7 958.8,165.1 959.5,189.9 960.2,160.5 960.9,192.4 961.6,163.0 962.3,194.3 963.0,161.5 963.7,194.0 964.4,162.7 965.1,197.2 965.8,162.9 966.5,195.0 967.2,162.6 967.9,191.8 968.6,162.4 969.3,190.5 970.0,162.1 970.7,192.3 971.4,166.3 972.1,194.2 972.8,164.1 973.5,191.0 974.2,166.5 974.9,192.0 975.6,162.8 976.3,195.3 977.0,162.5 977.7,187.4 978.4,163.1 979.1,190.3 979.8,162.8 980.5,192.6 981.2,164.3 981.9,190.6 982.6,163.8 983.3,192.0 984.0,164.9 984.7,192.5 985.4,163.6 986.1,192.2 986.8,164.8 987.5,190.1 988.2,165.5 988.9,189.7 989.6,163.1 990.3,190.6 991.0,164.6 991.7,192.0 992.4,164.6 993.1,189.4 993.8,164.4 994.5,189.5 995.2,162.6 995.9,191.5 996.6,167.9 997.3,190.8 998.0,160.4 998.7,192.2 999.4,163.9 1000.1,187.6 1000.8,163.6 1001.5,192.0 1002.2,162.8 1002.9,194.6 1003.6,162.7 1004.3,187.1 1005.0,163.7 1005.7,190.4 1006.4,163.1 1007.1,192.7 1007.8,165.9 1008.5,189.6 1009.2,165.0 1009.9,189.0 1010.6,164.4 1011.3,192.3 1012.0,164.7 1012.7,186.9 1013.4,166.0 1014.1,193.3 1014.8,163.5 1015.5,192.2 1016.2,161.2 1016.9,190.2 1017.6,167.6 1018.3,192.1 1019.0,162.3 1019.7,190.2 1020.4,162.4 1021.1,188.5 1021.8,163.2 1022.5,190.9 1023.2,163.1 1023.9,190.6 1024.6,161.4 1025.3,188.4 1026.0,162.3 1026.7,188.9 1027.4,163.1 1028.1,188.4 1028.8,163.6 1029.5,192.0 1030.2,162.0 1030.9,190.7 1031.6,161.1 1032.3,192.4 1033.0,162.7 1033.7,190.1 1034.4,165.6 1035.1,188.0 1035.8,162.7 1036.5,192.0 1037.2,163.5 1037.9,189.4 1038.6,158.7 1039.3,189.1 1040.0,164.7 1040.7,187.8 1041.4,155.7"/><polyline fill="none" stroke="#ffff00" stroke-width="1" stroke-linejoin="bevel"  points="1047.5,161.9 1048.2,189.5 1048.9,162.5 1049.6,190.9 1050.3,163.7 1051.0,189.6 1051.7,164.2 1052.4,189.6 1053.1,161.5 1053.8,188.5 1054.5,164.5 1055.2,191.1 1055.9,162.8 1056.6,188.5 1057.3,160.6 1058.0,187.1 1058.7,163.3 1059.4,191.6 1060.1,164.5 1060.8,187.0 1061.5,163.9 1062.2,190.0 1062.9,165.0 1063.6,187.9 1064.3,159.3 1065.0,186.6 1065.7,164.6 1066.4,189.3 1067.1,163.3 1067.8,189.9 1068.5,164.2 1069.2,192.2 1069.9,166.7 1070.6,186.2 1071.3,163.5 1072.0,186.6 1072.7,163.1 1073.4,188.7 1074.1,158.8 1074.8,189.3 1075.5,165.3 1076.2,189.8 1076.9,161.8 1077.6,190.0 1078.3,165.1 1079.0,188.9 1079.7,165.9 1080.4,188.9 1081.1,162.0 1081.8,188.5 1082.5,164.1 1083.2,190.3 1083.9,162.7 1084.6,189.4 1085.3,164.7 1086.0,188.1 1086.7,162.4 1087.4,191.3 1088.1,164.8 1088.8,190.2 1089.5,162.0 1090.2,188.1 1090.9,164.9 1091.6,188.5 1092.3,165.2 1093.0,187.9 1093.7,162.3 1094.4,188.2 1095.1,160.1 1095.8,187.3 1096.5,160.7 1097.2,188.1 1097.9,161.8 1098.6,187.3 1099.3,164.6 1100.0,187.5 1100.7,161.0 1101.4,190.8 1102.1,163.4 1102.8,188.4 1103.5,160.8 1104.2,188.8 1104.9,162.0 1105.6,188.6 1106.3,160.8 1107.0,185.7 1107.7,161.6 1108.4,189.3 1109.1,163.1 1109.8,188.8 1110.5,159.7 1111.2,186.0 1111.9,163.5 1112.6,187.5 1113.3,161.7 1114.0,186.2 1114.7,161.8 1115.4,188.3 1116.1,161.8 1116.8,189.7 1117.5,161.6 1118.2,185.2 1118.9,158.8 1119.6,189.3 1120.3,160.7 1121.0,190.8 1121.7,162.1 1122.4,186.3 1123.1,161.8 1123.8,189.9 1124.5,162.5 1125.2,184.3 1125.9,160.4 1126.6,191.6 1127.3,159.7 1128.0,189.6 1128.7,162.7 1129.4,189.5 1130.1,159.8 1130.8,184.8 1131.5,159.3 1132.2,186.0 1132.9,163.8 1133.6,185.1 1134.3,162.3 1135.0,188.1 1135.7,161.3 1136.4,184.9 1137.1,161.0 1137.8,186.5 1138.5,159.8 1139.2,186.4 1139.9,161.3 1140.6,186.1 1141.3,161.8 1142.0,187.1 1142.7,160.6 1143.4,188.1 1144.1,161.8 1144.8,187.6 1145.5,159.2 1146.2,189.8 1146.9,161.7 1147.6,187.8 1148.3,161.4 1149.0,190.7 1149.7,160.6 1150.4,185.6 1151.1,159.9 1151.8,186.8 1152.5,160.0 1153.2,186.8 1153.9,157.7 1154.6,186.3 1155.3,160.6 1156.0,185.8 1156.7,159.8 1157.4,188.3 1158.1,159.0 1158.8,186.6 1159.5,159.1 1160.2,187.3 1160.9,163.0 1161.6,192.1 1162.3,156.8 1163.0,186.4 1163.7,158.4 1164.4,186.9 1165.1,159.5 1165.8,186.5 1166.5,157.9 1167.2,186.6 1167.9,156.5 1168.6,184.5 1169.3,158.7 1170.0,185.2 1170.7,158.9 1171.4,184.9 1172.1,156.3 1172.8,185.1 1173.5,157.4 1174.2,184.8 1174.9,156.9 1175.6,183.0 1176.3,154.8"/><polyline fill="none" stroke="#ffff00" stroke-width="1" stroke-linejoin="bevel"  points="1186.0,156.5 1186.7,180.4 1187.4,155.8 1188.1,182.6 1188.8,153.5 1189.5,181.6 1190.2,154.1 1190.9,182.3 1191.6,153.8 1192.3,181.7 1193.0,154.3 1193.7,183.8 1194.4,151.6 1195.1,180.0 1195.8,154.0 1196.5,182.2 1197.2,157.7 1197.9,182.2 1198.6,155.1 1199.3,182.5"/><polyline fill="none" stroke="#ffff00" stroke-width="1" stroke-linejoin="bevel"  points="1206.0,151.3 1206.7,179.8 1207.4,151.7 1208.1,183.0 1208.8,154.0 1209.5,179.4 1210.2,151.1 1210.9,180.8 1211.6,147.5 1212.3,182.7 1213.0,150.6 1213.7,182.2 1214.4,149.5 1215.1,185.4 1215.8,153.5 1216.5,181.6 1217.2,152.0 1217.9,177.8 1218.6,154.2 1219.3,180.2 1220.0,155.6 1220.7,178.8 1221.4,147.7 1222.1,184.0 1222.8,153.2 1223.5,180.5 1224.2,151.7 1224.9,187.0 1225.6,151.8 1226.3,182.6 1227.0,152.0 1227.7,179.5 1228.4,151.5 1229.1,181.2 1229.8,150.6 1230.5,176.6 1231.2,151.2 1231.9,181.4 1232.6,149.8 1233.3,180.4 1234.0,151.4 1234.7,182.4 1235.4,151.3 1236.1,184.2 1236.8,149.7 1237.5,182.9 1238.2,151.8 1238.9,178.8 1239.6,151.9 1240.3,183.8 1241.0,151.2 1241.7,181.0 1242.4,150.9"/><polyline fill="none" stroke="#ffff00" stroke-width="1" stroke-linejoin="bevel"  points="1244.0,152.4 1244.7,180.4 1245.4,151.7 1246.1,178.7 1246.8,147.9 1247.5,181.9 1248.2,153.0 1248.9,180.9 1249.6,149.0 1250.3,182.0 1251.0,150.9 1251.7,177.3 1252.4,151.0 1253.1,178.1 1253.8,149.4 1254.5,180.2 1255.2,152.5 1255.9,177.8 1256.6,151.0 1257.3,175.0 1258.0,151.3 1258.7,177.1 1259.4,149.7 1260.1,184.3 1260.8,148.9 1261.5,177.1 1262.2,149.8 1262.9,180.1 1263.6,151.0 1264.3,181.3 1265.0,147.0"/><polyline fill="none" stroke="#ffff00" stroke-width="1" stroke-linejoin="bevel"  points="1269.5,149.9 1270.2,176.9 1270.9,148.5 1271.6,178.5 1272.3,148.3 1273.0,178.8 1273.7,146.0 1274.4,181.7 1275.1,150.6 1275.8,178.1 1276.5,143.7 1277.2,175.0 1277.9,150.0 1278.6,177.6 1279.3,148.3 1280.0,176.9 1280.7,150.9 1281.4,179.8 1282.1,147.7 1282.8,179.2 1283.5,149.1 1284.2,177.9 1284.9,152.5 1285.6,178.1 1286.3,149.9 1287.0,177.8 1287.7,149.2 1288.4,177.4 1289.1,149.1 1289.8,176.4 1290.5,153.0 1291.2,176.6 1291.9,150.2 1292.6,176.1 1293.3,149.9 1294.0,176.8 1294.7,146.8 1295.4,175.8 1296.1,145.4 1296.8,175.9 1297.5,151.2 1298.2,175.2 1298.9,148.8 1299.6,175.6 1300.3,152.5 1301.0,177.8 1301.7,148.4 1302.4,176.5 1303.1,150.6 1303.8,176.1 1304.5,149.8 1305.2,177.3 1305.9,147.0 1306.6,175.3 1307.3,147.5 1308.0,177.5 1308.7,151.0 1309.4,174.8 1310.1,149.3 1310.8,175.9 1311.5,147.8"/><polyline fill="none" stroke="#ffff00" points="993.6,166.0 994.3,150.0 995.0,166.0"/><polyline fill="none" stroke="#ffff00" points="1005.3,166.0 1006.0,155.0 1006.7,166.0"/><polyline fill="none" stroke="#ffff00" points="1013.8,164.0 1014.5,130.0 1015.2,164.0"/><polyline fill="none" stroke="#ffff00" points="1025.8,166.0 1026.5,141.0 1027.2,166.0"/><polyline fill="none" stroke="#ffff00" points="1028.8,166.0 1029.5,137.0 1030.2,166.0"/><polyline fill="none" stroke="#ffff00" points="1229.7,154.0 1230.4,140.6 1231.1,154.0"/><polyline fill="none" stroke="#ffff00" points="934.5,164 934.5,103 935.5,170"/><polyline fill="none" stroke="#ffff00" points="1041.5,168 1042,178 1042.5,150 1043,125 1043.5,114 1044,130 1044.5,160 1045,135 1045.6,106 1046.2,130 1046.8,175 1047.5,168"/><polyline fill="none" stroke="#ffff00" points="1176.5,170 1177,140 1177.5,116 1178.5,130 1179.5,118 1180.3,97 1181,125 1182,160 1182.5,175 1183.2,140 1184.4,114.5 1185.2,140 1186,170"/><polyline fill="none" stroke="#ffff00" points="1200,170 1201,145 1202,125 1202.8,116 1203.5,130 1204.2,118 1205.1,109 1205.6,140 1206,165"/><polyline fill="none" stroke="#ffff00" points="1242.5,165 1243.5,113 1244,170"/><polyline fill="none" stroke="#ffff00" points="1265.5,168 1266.3,140 1267,128 1267.6,135 1268,126 1268.6,133 1269.5,165"/><text x="952" y="83" class="lb">Skyline</text><text x="1298.6" y="83" class="lb" text-anchor="end">Atlanta</text><text x="1123" y="251" class="up" text-anchor="middle">Updated: 3 sec ago</text></svg>
<svg class="p" style="left:125px;top:268px" width="394" height="206" viewBox="125 268 394 206"><rect x="125" y="268" width="394" height="206" fill="#990000"/><rect x="133" y="276" width="378" height="190" fill="#000"/><rect x="133" y="276" width="378" height="190" fill="#000"/><g stroke="#969696" stroke-width="1" stroke-dasharray="4 2" shape-rendering="crispEdges"><line x1="181.5" y1="276" x2="181.5" y2="454"/><line x1="214.5" y1="276" x2="214.5" y2="454"/><line x1="247.5" y1="276" x2="247.5" y2="454"/><line x1="280.5" y1="276" x2="280.5" y2="454"/><line x1="313.5" y1="276" x2="313.5" y2="454"/><line x1="346.5" y1="276" x2="346.5" y2="454"/><line x1="379.5" y1="276" x2="379.5" y2="454"/><line x1="412.5" y1="276" x2="412.5" y2="454"/><line x1="445.5" y1="276" x2="445.5" y2="454"/><line x1="478.5" y1="276" x2="478.5" y2="454"/><line x1="511.5" y1="276" x2="511.5" y2="454"/><line x1="181" y1="276.5" x2="512" y2="276.5"/><line x1="181" y1="294.5" x2="512" y2="294.5"/><line x1="181" y1="311.5" x2="512" y2="311.5"/><line x1="181" y1="329.5" x2="512" y2="329.5"/><line x1="181" y1="347.5" x2="512" y2="347.5"/><line x1="181" y1="364.5" x2="512" y2="364.5"/><line x1="181" y1="382.5" x2="512" y2="382.5"/><line x1="181" y1="400.5" x2="512" y2="400.5"/><line x1="181" y1="418.5" x2="512" y2="418.5"/><line x1="181" y1="435.5" x2="512" y2="435.5"/><line x1="181" y1="453.5" x2="512" y2="453.5"/></g><text x="179" y="280.0" class="ax" text-anchor="end">-30 dBm</text><text x="179" y="297.7" class="ax" text-anchor="end">-40 dBm</text><text x="179" y="315.4" class="ax" text-anchor="end">-50 dBm</text><text x="179" y="333.1" class="ax" text-anchor="end">-60 dBm</text><text x="179" y="350.8" class="ax" text-anchor="end">-70 dBm</text><text x="179" y="368.5" class="ax" text-anchor="end">-80 dBm</text><text x="179" y="386.2" class="ax" text-anchor="end">-90 dBm</text><text x="179" y="403.9" class="ax" text-anchor="end">-100 dBm</text><text x="179" y="421.6" class="ax" text-anchor="end">-110 dBm</text><text x="179" y="439.3" class="ax" text-anchor="end">-120 dBm</text><text x="179" y="457.0" class="ax" text-anchor="end">-130 dBm</text><polyline fill="none" stroke="#ffff00" stroke-width="1" stroke-linejoin="bevel"  points="181.0,386.4 182.0,384.1 183.0,387.3 184.0,384.0 185.0,386.4 186.0,382.7 187.0,386.4 188.0,383.8 189.0,387.0 190.0,381.6 191.0,385.4 192.0,384.5 193.0,386.2 194.0,382.7 195.0,385.0 196.0,382.8 197.0,387.5 198.0,381.9 199.0,386.6 200.0,381.9 201.0,384.3 202.0,382.5 203.0,385.9 204.0,379.7 205.0,383.1 206.0,378.5 207.0,377.6 208.0,377.2 209.0,374.7 210.0,370.2 211.0,369.0 212.0,363.2 213.0,365.7 214.0,361.9 215.0,363.8 216.0,361.1 217.0,364.1 218.0,361.6 219.0,365.9 220.0,359.2 221.0,366.0 222.0,361.0 223.0,362.7 224.0,359.9 225.0,363.4 226.0,361.2 227.0,361.2 228.0,361.0 229.0,363.0 230.0,361.3 231.0,359.5 232.0,360.8 233.0,362.3 234.0,359.7 235.0,363.4 236.0,360.0 237.0,360.1 238.0,361.4 239.0,362.2 240.0,359.7 241.0,363.7 242.0,356.1 243.0,362.0 244.0,359.8 245.0,362.0 246.0,359.2 247.0,362.7 248.0,358.6 249.0,361.9 250.0,356.9 251.0,361.8 252.0,360.5 253.0,360.3 254.0,359.6 255.0,361.5 256.0,357.0 257.0,360.7 258.0,360.5 259.0,363.5 260.0,359.5 261.0,362.8 262.0,360.1 263.0,361.6 264.0,359.4 265.0,363.6 266.0,359.5 267.0,362.2 268.0,359.3 269.0,358.7 270.0,357.3 271.0,359.6 272.0,359.8 273.0,360.4 274.0,357.7 275.0,361.5 276.0,356.6 277.0,362.1 278.0,356.3 279.0,361.5 280.0,358.1 281.0,359.9 282.0,358.1 283.0,360.5 284.0,357.5 285.0,358.8 286.0,357.0 287.0,361.8 288.0,357.8 289.0,360.3 290.0,355.9 291.0,360.0 292.0,356.2 293.0,358.7 294.0,357.6 295.0,360.1 296.0,356.4 297.0,358.8 298.0,355.0 299.0,359.5 300.0,355.2 301.0,357.7 302.0,354.8 303.0,359.6 304.0,355.1 305.0,359.7 306.0,354.2 307.0,359.4 308.0,356.8 309.0,358.4 310.0,355.6 311.0,359.0 312.0,357.1 313.0,357.0 314.0,356.1 315.0,358.3 316.0,354.6 317.0,359.7 318.0,354.9 319.0,358.0 320.0,352.7 321.0,356.2 322.0,353.8 323.0,357.3 324.0,351.5 325.0,356.2 326.0,352.6 327.0,356.1 328.0,356.3 329.0,358.1 330.0,353.0 331.0,356.0 332.0,355.2 333.0,355.8 334.0,354.4 335.0,356.4 336.0,353.8 337.0,356.0 338.0,352.3 339.0,356.0 340.0,353.2 341.0,358.8 342.0,353.4 343.0,357.1 344.0,354.0 345.0,357.8 346.0,352.5 347.0,355.6 348.0,356.0 349.0,355.9 350.0,352.4 351.0,355.8 352.0,351.9 353.0,356.7 354.0,353.9 355.0,357.7 356.0,352.6 357.0,358.6 358.0,353.1 359.0,356.0 360.0,352.2 361.0,357.7 362.0,355.5 363.0,357.7 364.0,355.7 365.0,355.8 366.0,352.0 367.0,356.5 368.0,356.3 369.0,357.1 370.0,354.5 371.0,357.0 372.0,355.4 373.0,357.6 374.0,355.9 375.0,359.1 376.0,353.0 377.0,357.7 378.0,353.0 379.0,357.8 380.0,353.8 381.0,356.9 382.0,354.2 383.0,358.1 384.0,353.2 385.0,356.5 386.0,353.8 387.0,359.0 388.0,353.2 389.0,356.3 390.0,353.8 391.0,358.8 392.0,355.4 393.0,356.8 394.0,354.2 395.0,358.0 396.0,352.5 397.0,359.5 398.0,356.1 399.0,357.5 400.0,353.2 401.0,358.3 402.0,355.7 403.0,358.1 404.0,354.1 405.0,358.8 406.0,355.2 407.0,358.4 408.0,354.3 409.0,357.5 410.0,355.8 411.0,358.6 412.0,354.7 413.0,356.5 414.0,353.6 415.0,355.9 416.0,356.3 417.0,358.4 418.0,354.8 419.0,358.5 420.0,355.0 421.0,359.3 422.0,354.5 423.0,358.6 424.0,355.8 425.0,358.3 426.0,355.8 427.0,358.9 428.0,355.1 429.0,358.4 430.0,355.0 431.0,358.1 432.0,355.1 433.0,358.2 434.0,355.7 435.0,359.7 436.0,355.3 437.0,358.7 438.0,356.2 439.0,359.2 440.0,353.0 441.0,357.5 442.0,354.0 443.0,359.4 444.0,356.8 445.0,357.6 446.0,357.3 447.0,359.4 448.0,356.2 449.0,358.3 450.0,355.9 451.0,358.0 452.0,357.6 453.0,357.4 454.0,356.5 455.0,360.0 456.0,355.0 457.0,360.2 458.0,356.8 459.0,360.1 460.0,357.5 461.0,360.2 462.0,357.0 463.0,359.2 464.0,357.1 465.0,360.6 466.0,356.2 467.0,360.4 468.0,358.3 469.0,359.8 470.0,356.8 471.0,360.1 472.0,357.3 473.0,359.0 474.0,357.5 475.0,359.0 476.0,358.4 477.0,361.2 478.0,358.9 479.0,363.3 480.0,363.9 481.0,369.4 482.0,370.2 483.0,376.2 484.0,375.0 485.0,381.2 486.0,377.7 487.0,381.7 488.0,376.6 489.0,380.2 490.0,378.0 491.0,381.0 492.0,379.2 493.0,383.2 494.0,377.9 495.0,382.6 496.0,378.6 497.0,382.5 498.0,379.4 499.0,382.9 500.0,379.4 501.0,383.5 502.0,380.4 503.0,383.0 504.0,382.4 505.0,385.5 506.0,384.0 507.0,386.3 508.0,384.0 509.0,389.1 510.0,386.0 511.0,388.5"/><rect x="343" y="276" width="1.5" height="177" fill="#fff"/><text x="181" y="463.5" class="ax">1000.919983 MHZ</text><text x="346" y="463.5" class="ax" text-anchor="middle">1020.919983 MHZ</text><text x="511" y="463.5" class="ax" text-anchor="end">1040.920044 MHZ</text><text x="345.5" y="450" class="up" text-anchor="middle">Last Updated: 1 seconds ago</text><text x="277.6" y="289.6" class="up" style="fill:#ff0000;font-size:10.6px">|M2-M1| is 16.39 dB (&lt;21.5)</text><clipPath id="cl4"><rect x="181" y="276" width="330.5" height="178"/></clipPath><text x="304.7" y="305.6" class="mk" clip-path="url(#cl4)">M1 F: 1020.549988 MHZ A: –74.78 dBm</text><text x="197.3" y="293.3" class="lb">Denver-1</text><text x="500.2" y="293.3" class="lb" text-anchor="end">Denver</text></svg>
<svg class="p" style="left:525px;top:268px" width="395" height="206" viewBox="525 268 395 206"><rect x="525" y="268" width="395" height="206" fill="#990000"/><rect x="533" y="276" width="379" height="190" fill="#000"/><g stroke="#969696" stroke-width="1" stroke-dasharray="4 2" shape-rendering="crispEdges"><line x1="533.5" y1="276" x2="533.5" y2="467"/><line x1="571.5" y1="276" x2="571.5" y2="467"/><line x1="609.5" y1="276" x2="609.5" y2="467"/><line x1="647.5" y1="276" x2="647.5" y2="467"/><line x1="685.5" y1="276" x2="685.5" y2="467"/><line x1="722.5" y1="276" x2="722.5" y2="467"/><line x1="760.5" y1="276" x2="760.5" y2="467"/><line x1="798.5" y1="276" x2="798.5" y2="467"/><line x1="836.5" y1="276" x2="836.5" y2="467"/><line x1="874.5" y1="276" x2="874.5" y2="467"/><line x1="912.5" y1="276" x2="912.5" y2="467"/><line x1="533" y1="276.5" x2="913" y2="276.5"/><line x1="533" y1="295.5" x2="913" y2="295.5"/><line x1="533" y1="314.5" x2="913" y2="314.5"/><line x1="533" y1="333.5" x2="913" y2="333.5"/><line x1="533" y1="352.5" x2="913" y2="352.5"/><line x1="533" y1="371.5" x2="913" y2="371.5"/><line x1="533" y1="390.5" x2="913" y2="390.5"/><line x1="533" y1="409.5" x2="913" y2="409.5"/><line x1="533" y1="428.5" x2="913" y2="428.5"/><line x1="533" y1="447.5" x2="913" y2="447.5"/><line x1="533" y1="466.5" x2="913" y2="466.5"/></g><polyline fill="none" stroke="#00ff00" stroke-width="2" stroke-linejoin="bevel"  points="622.4,401.8 623.4,377.5 624.4,379.8 625.4,375.6 626.4,378.3 627.4,374.1 628.4,377.3 629.4,374.9 630.4,376.8 631.4,372.1 632.4,376.4 633.4,370.4 634.4,374.2 635.4,371.0 636.4,372.4 637.4,368.9 638.4,370.6 639.4,366.0 640.4,366.9 641.4,364.1 642.4,365.4 643.4,362.3 644.4,363.9 645.4,361.5 646.4,364.4 647.4,360.3 648.4,363.9 649.4,360.8 650.4,363.6 651.4,361.5 652.4,363.8 653.4,361.1 654.4,363.7 655.4,361.2 656.4,364.2 657.4,360.5 658.4,363.8 659.4,361.4 660.4,364.1 661.4,361.6 662.4,363.5 663.4,361.6 664.4,364.0 665.4,361.8 666.4,365.8 667.4,361.4 668.4,363.7 669.4,361.0 670.4,363.8 671.4,361.3 672.4,364.1 673.4,361.7 674.4,364.2 675.4,360.7 676.4,363.6 677.4,361.4 678.4,363.6 679.4,361.4 680.4,364.7 681.4,362.5 682.4,363.9 683.4,360.6 684.4,364.2 685.4,360.8 686.4,363.6 687.4,361.0 688.4,363.8 689.4,361.2 690.4,364.5 691.4,361.2 692.4,364.0 693.4,361.4 694.4,363.9 695.4,361.7 696.4,363.8 697.4,363.4 698.4,363.4 699.4,362.6 700.4,363.9 701.4,361.0 702.4,364.2 703.4,361.2 704.4,364.0 705.4,361.4 706.4,363.2 707.4,361.0 708.4,363.8 709.4,361.3 710.4,364.6 711.4,359.9 712.4,364.2 713.4,360.9 714.4,364.4 715.4,360.7 716.4,364.3 717.4,361.5 718.4,364.1 719.4,360.0 720.4,363.8 721.4,361.4 722.4,364.4 723.4,360.7 724.4,364.7 725.4,361.1 726.4,364.2 727.4,360.9 728.4,363.8 729.4,361.6 730.4,363.9 731.4,361.0 732.4,364.5 733.4,360.3 734.4,363.9 735.4,361.1 736.4,364.4 737.4,361.9 738.4,365.8 739.4,364.2 740.4,367.6 741.4,365.9 742.4,370.3 743.4,368.4 744.4,373.6 745.4,370.9 746.4,374.8 747.4,373.2 748.4,377.8 749.4,375.5 750.4,380.1 751.4,377.6 752.4,380.9 753.4,377.7 754.4,381.1 755.4,378.3 756.4,381.6 757.4,378.3 758.4,381.4 759.4,378.8 760.4,381.4 761.4,378.8 762.4,381.2"/><polyline fill="none" stroke="#ff0000" stroke-width="2" stroke-linejoin="bevel"  points="622.4,400.0 623.4,397.5 624.4,402.1 625.4,398.2 626.4,402.1 627.4,399.2 628.4,401.5 629.4,398.6 630.4,396.9 631.4,396.1 632.4,398.3 633.4,394.8 634.4,395.9 635.4,391.9 636.4,393.9 637.4,390.6 638.4,391.5 639.4,387.8 640.4,390.1 641.4,386.0 642.4,387.8 643.4,385.0 644.4,388.4 645.4,384.0 646.4,385.0 647.4,383.3 648.4,387.1 649.4,384.0 650.4,386.9 651.4,384.3 652.4,386.4 653.4,384.0 654.4,386.6 655.4,383.4 656.4,386.5 657.4,383.6 658.4,386.7 659.4,383.6 660.4,387.3 661.4,384.0 662.4,386.8 663.4,384.1 664.4,385.8 665.4,383.4 666.4,387.5 667.4,384.6 668.4,386.7 669.4,384.4 670.4,387.3 671.4,384.5 672.4,385.7 673.4,384.3 674.4,386.7 675.4,384.9 676.4,385.9 677.4,385.1 678.4,386.2 679.4,383.7 680.4,386.4 681.4,383.2 682.4,386.3 683.4,384.0 684.4,386.4 685.4,384.2 686.4,386.4 687.4,383.7 688.4,386.8 689.4,383.4 690.4,386.7 691.4,383.7 692.4,386.9 693.4,383.9 694.4,386.4 695.4,383.9 696.4,386.4 697.4,383.8 698.4,386.6 699.4,384.3 700.4,387.3 701.4,383.8 702.4,386.6 703.4,384.4 704.4,386.4 705.4,384.0 706.4,386.1 707.4,383.6 708.4,386.9 709.4,383.8 710.4,385.9 711.4,383.9 712.4,386.7 713.4,383.9 714.4,386.0 715.4,383.9 716.4,386.4 717.4,383.8 718.4,385.9 719.4,383.6 720.4,385.9 721.4,383.6 722.4,386.7 723.4,384.1 724.4,387.2 725.4,383.6 726.4,385.8 727.4,383.9 728.4,387.2 729.4,383.7 730.4,386.9 731.4,384.1 732.4,386.4 733.4,384.7 734.4,386.6 735.4,384.3 736.4,386.2 737.4,385.4 738.4,388.0 739.4,385.3 740.4,390.3 741.4,387.4 742.4,391.4 743.4,389.9 744.4,394.3 745.4,393.0 746.4,396.8 747.4,394.7 748.4,399.1 749.4,396.8 750.4,400.7 751.4,398.7 752.4,401.2 753.4,400.6 754.4,403.0 755.4,401.0 756.4,403.3 757.4,400.2 758.4,403.5 759.4,400.6 760.4,402.8 761.4,399.7"/><polyline fill="none" stroke="#ffff00" stroke-width="1" stroke-linejoin="bevel"  points="533.0,368.9 534.0,366.2 535.0,369.1 536.0,365.2 537.0,368.8 538.0,365.7 539.0,369.9 540.0,365.9 541.0,369.5 542.0,368.9 543.0,370.0 544.0,366.6 545.0,371.5 546.0,367.1 547.0,371.5 548.0,366.9 549.0,368.6 550.0,366.7 551.0,369.0 552.0,365.0 553.0,369.5 554.0,367.4 555.0,370.0 556.0,368.0 557.0,369.2 558.0,368.4 559.0,370.8 560.0,368.1 561.0,369.8 562.0,366.8 563.0,367.2 564.0,366.8 565.0,370.1 566.0,368.2 567.0,369.2 568.0,371.8 569.0,383.7 570.0,372.0 571.0,371.6 572.0,367.3 573.0,368.2 574.0,365.6 575.0,368.9 576.0,366.6 577.0,370.0 578.0,367.0 579.0,369.7 580.0,366.9 581.0,369.0 582.0,367.0 583.0,370.7 584.0,366.4 585.0,369.7 586.0,366.3 587.0,368.5 588.0,365.6 589.0,370.4 590.0,367.9 591.0,371.0 592.0,366.6 593.0,368.1 594.0,366.7 595.0,369.0 596.0,366.9 597.0,370.5 598.0,366.3 599.0,370.0 600.0,367.0 601.0,368.5 602.0,367.7 603.0,368.8 604.0,365.9 605.0,370.4 606.0,369.5 607.0,371.8 608.0,372.6 609.0,375.7 610.0,373.3 611.0,376.0 612.0,376.4 613.0,379.6 614.0,379.9 615.0,382.1 616.0,382.8 617.0,387.6 618.0,383.5 619.0,388.2 620.0,386.7 621.0,388.2 622.0,384.9 623.0,389.1 624.0,384.8 625.0,387.3 626.0,384.1 627.0,387.7 628.0,383.8 629.0,386.0 630.0,382.6 631.0,384.0 632.0,380.4 633.0,381.4 634.0,378.6 635.0,379.0 636.0,375.3 637.0,378.6 638.0,374.0 639.0,377.1 640.0,373.5 641.0,375.2 642.0,371.4 643.0,374.6 644.0,369.5 645.0,372.0 646.0,369.0 647.0,370.5 648.0,368.8 649.0,368.5 650.0,371.0 651.0,372.0 652.0,369.2 653.0,371.7 654.0,370.1 655.0,373.1 656.0,369.3 657.0,371.7 658.0,369.0 659.0,371.6 660.0,369.7 661.0,371.9 662.0,370.2 663.0,371.4 664.0,369.5 665.0,373.0 666.0,369.2 667.0,378.0 668.0,376.4 669.0,372.5 670.0,368.9 671.0,371.0 672.0,368.0 673.0,371.7 674.0,368.1 675.0,371.3 676.0,369.7 677.0,369.5 678.0,367.5 679.0,372.9 680.0,368.9 681.0,370.4 682.0,369.0 683.0,369.4 684.0,368.6 685.0,371.5 686.0,367.9 687.0,372.6 688.0,368.9 689.0,370.7 690.0,369.6 691.0,370.0 692.0,368.3 693.0,371.6 694.0,369.1 695.0,371.1 696.0,369.6 697.0,372.2 698.0,368.3 699.0,370.8 700.0,367.9 701.0,369.7 702.0,366.5 703.0,370.4 704.0,369.9 705.0,370.6 706.0,365.6 707.0,370.8 708.0,368.5 709.0,371.4 710.0,368.1 711.0,370.4 712.0,367.9 713.0,372.5 714.0,369.0 715.0,369.6 716.0,368.6 717.0,376.5 718.0,382.3 719.0,371.2 720.0,368.9 721.0,371.7 722.0,368.5 723.0,372.9 724.0,369.8 725.0,371.5 726.0,368.9 727.0,372.3 728.0,368.1 729.0,373.4 730.0,369.1 731.0,373.5 732.0,369.3 733.0,371.8 734.0,369.0 735.0,371.8 736.0,369.1 737.0,373.0 738.0,368.6 739.0,373.2 740.0,369.6 741.0,373.8 742.0,368.9 743.0,377.6 744.0,374.8 745.0,379.4 746.0,377.0 747.0,380.4 748.0,380.3 749.0,384.4 750.0,383.2 751.0,386.8 752.0,385.2 753.0,388.2 754.0,388.8 755.0,388.0 756.0,388.0 757.0,387.4 758.0,387.0 759.0,389.1 760.0,387.8 761.0,389.5 762.0,386.6 763.0,386.8 764.0,386.3 765.0,386.0 766.0,382.7 767.0,384.3 768.0,380.2 769.0,380.4 770.0,372.8 771.0,377.9 772.0,373.1 773.0,374.8 774.0,371.9 775.0,375.0 776.0,368.6 777.0,374.8 778.0,371.5 779.0,370.1 780.0,371.6 781.0,374.4 782.0,372.1 783.0,374.6 784.0,371.6 785.0,375.0 786.0,370.7 787.0,375.0 788.0,371.3 789.0,373.2 790.0,372.0 791.0,373.7 792.0,372.0 793.0,374.5 794.0,371.7 795.0,374.3 796.0,370.6 797.0,374.0 798.0,371.5 799.0,374.0 800.0,369.2 801.0,373.8 802.0,372.0 803.0,373.5 804.0,372.5 805.0,373.2 806.0,370.1 807.0,374.5 808.0,370.1 809.0,373.8 810.0,370.6 811.0,374.2 812.0,371.4 813.0,373.7 814.0,370.6 815.0,376.5 816.0,380.9 817.0,375.3 818.0,369.6 819.0,373.3 820.0,371.5 821.0,374.6 822.0,370.0 823.0,374.6 824.0,372.3 825.0,374.1 826.0,370.8 827.0,373.1 828.0,371.4 829.0,374.9 830.0,370.8 831.0,375.2 832.0,374.5 833.0,375.1 834.0,371.4 835.0,373.6 836.0,371.6 837.0,373.3 838.0,370.9 839.0,373.6 840.0,371.7 841.0,374.7 842.0,370.3 843.0,372.0 844.0,370.4 845.0,373.6 846.0,369.5 847.0,373.4 848.0,372.3 849.0,373.8 850.0,370.4 851.0,374.3 852.0,370.3 853.0,373.3 854.0,371.8 855.0,375.5 856.0,371.0 857.0,373.5 858.0,370.3 859.0,373.0 860.0,370.5 861.0,374.3 862.0,371.4 863.0,374.1 864.0,369.9 865.0,381.4 866.0,380.1 867.0,373.0 868.0,369.4 869.0,374.7 870.0,370.1 871.0,372.3 872.0,371.0 873.0,372.2 874.0,371.7 875.0,374.6 876.0,372.5 877.0,377.7 878.0,377.0 879.0,380.9 880.0,379.1 881.0,384.1 882.0,383.7 883.0,387.9 884.0,386.9 885.0,390.8 886.0,388.3 887.0,391.1 888.0,387.8 889.0,392.0 890.0,388.3 891.0,389.2 892.0,388.7 893.0,391.3 894.0,388.7 895.0,391.1 896.0,388.2 897.0,390.6 898.0,389.7 899.0,393.2 900.0,388.9 901.0,392.3 902.0,388.7 903.0,393.3 904.0,390.9 905.0,393.1 906.0,390.5 907.0,394.2 908.0,389.6 909.0,394.9 910.0,390.7 911.0,394.1 912.0,391.3"/><polyline fill="none" stroke="#00ff00" stroke-width="1.2" points="623,399.5 623,378.4"/><polyline fill="none" stroke="#00ff00" stroke-width="1.2" points="763,380 763,402"/><text x="551.5" y="295.0" class="lb">Denver-2</text><text x="898.5" y="295" class="lb" text-anchor="end">Denver</text><text x="722.5" y="463" class="up" text-anchor="middle">Updated: 0 sec ago</text></svg>
<svg class="p" style="left:926px;top:268px" width="394" height="206" viewBox="926 268 394 206"><rect x="926" y="268" width="394" height="206" fill="#000"/><rect x="934" y="276" width="378" height="190" fill="#000"/><g stroke="#969696" stroke-width="1" stroke-dasharray="4 2" shape-rendering="crispEdges"><line x1="934.5" y1="276" x2="934.5" y2="467"/><line x1="972.5" y1="276" x2="972.5" y2="467"/><line x1="1010.5" y1="276" x2="1010.5" y2="467"/><line x1="1047.5" y1="276" x2="1047.5" y2="467"/><line x1="1085.5" y1="276" x2="1085.5" y2="467"/><line x1="1123.5" y1="276" x2="1123.5" y2="467"/><line x1="1161.5" y1="276" x2="1161.5" y2="467"/><line x1="1199.5" y1="276" x2="1199.5" y2="467"/><line x1="1236.5" y1="276" x2="1236.5" y2="467"/><line x1="1274.5" y1="276" x2="1274.5" y2="467"/><line x1="1312.5" y1="276" x2="1312.5" y2="467"/><line x1="934" y1="276.5" x2="1313" y2="276.5"/><line x1="934" y1="295.5" x2="1313" y2="295.5"/><line x1="934" y1="314.5" x2="1313" y2="314.5"/><line x1="934" y1="333.5" x2="1313" y2="333.5"/><line x1="934" y1="352.5" x2="1313" y2="352.5"/><line x1="934" y1="371.5" x2="1313" y2="371.5"/><line x1="934" y1="390.5" x2="1313" y2="390.5"/><line x1="934" y1="409.5" x2="1313" y2="409.5"/><line x1="934" y1="428.5" x2="1313" y2="428.5"/><line x1="934" y1="447.5" x2="1313" y2="447.5"/><line x1="934" y1="466.5" x2="1313" y2="466.5"/></g><polyline fill="none" stroke="#ffff00" stroke-width="1" stroke-linejoin="bevel"  points="934.0,396.8 935.0,392.0 936.0,397.8 937.0,393.6 938.0,395.4 939.0,394.8 940.0,396.4 941.0,392.8 942.0,396.9 943.0,394.8 944.0,397.0 945.0,392.5 946.0,397.9 947.0,394.7 948.0,397.1 949.0,394.2 950.0,397.8 951.0,393.5 952.0,395.3 953.0,395.5 954.0,395.8 955.0,392.8 956.0,397.6 957.0,394.1 958.0,396.4 959.0,393.8 960.0,397.8 961.0,394.9 962.0,396.3 963.0,394.1 964.0,396.8 965.0,392.4 966.0,397.9 967.0,393.4 968.0,396.6 969.0,393.5 970.0,396.9 971.0,393.3 972.0,398.9 973.0,393.9 974.0,395.4 975.0,394.8 976.0,395.7 977.0,394.5 978.0,397.1 979.0,388.6 980.0,397.2 981.0,394.5 982.0,396.7 983.0,394.9 984.0,397.1 985.0,395.3 986.0,397.1 987.0,395.4 988.0,396.7 989.0,395.0 990.0,396.0 991.0,392.4 992.0,396.6 993.0,394.0 994.0,397.9 995.0,391.7 996.0,397.5 997.0,394.6 998.0,397.2 999.0,393.7 1000.0,397.9 1001.0,394.8 1002.0,395.9 1003.0,395.1 1004.0,396.7 1005.0,394.3 1006.0,396.1 1007.0,393.3 1008.0,397.2 1009.0,394.2 1010.0,397.8 1011.0,393.1 1012.0,396.8 1013.0,393.4 1014.0,398.1 1015.0,392.6 1016.0,396.5 1017.0,393.0 1018.0,394.7 1019.0,393.9 1020.0,396.0 1021.0,392.9 1022.0,395.5 1023.0,395.1 1024.0,395.4 1025.0,395.2 1026.0,396.0 1027.0,392.9 1028.0,395.3 1029.0,392.6 1030.0,398.1 1031.0,392.2 1032.0,392.5 1033.0,387.9 1034.0,391.1 1035.0,386.8 1036.0,387.9 1037.0,383.3 1038.0,385.4 1039.0,381.5 1040.0,381.9 1041.0,378.4 1042.0,380.1 1043.0,374.4 1044.0,376.2 1045.0,372.9 1046.0,373.3 1047.0,369.3 1048.0,368.2 1049.0,369.1 1050.0,369.1 1051.0,364.7 1052.0,366.9 1053.0,362.5 1054.0,367.5 1055.0,363.5 1056.0,365.3 1057.0,361.9 1058.0,365.3 1059.0,361.7 1060.0,364.7 1061.0,363.1 1062.0,365.4 1063.0,363.1 1064.0,364.9 1065.0,361.7 1066.0,363.7 1067.0,360.2 1068.0,363.6 1069.0,361.5 1070.0,364.1 1071.0,360.5 1072.0,364.2 1073.0,359.5 1074.0,363.0 1075.0,359.3 1076.0,364.2 1077.0,360.7 1078.0,365.2 1079.0,360.7 1080.0,363.1 1081.0,356.8 1082.0,364.5 1083.0,359.9 1084.0,362.5 1085.0,360.2 1086.0,363.3 1087.0,359.4 1088.0,361.5 1089.0,358.6 1090.0,362.6 1091.0,358.9 1092.0,360.0 1093.0,358.1 1094.0,362.7 1095.0,359.8 1096.0,360.3 1097.0,358.5 1098.0,362.6 1099.0,357.1 1100.0,362.6 1101.0,357.3 1102.0,362.0 1103.0,359.3 1104.0,362.2 1105.0,358.6 1106.0,361.7 1107.0,356.6 1108.0,362.8 1109.0,360.0 1110.0,362.5 1111.0,358.3 1112.0,359.5 1113.0,360.8 1114.0,362.3 1115.0,357.7 1116.0,361.7 1117.0,359.0 1118.0,362.1 1119.0,359.5 1120.0,361.5 1121.0,358.3 1122.0,362.1 1123.0,359.3 1124.0,362.0 1125.0,358.4 1126.0,362.4 1127.0,357.5 1128.0,360.7 1129.0,358.0 1130.0,361.3 1131.0,356.3 1132.0,361.5 1133.0,361.2 1134.0,361.2 1135.0,358.8 1136.0,360.6 1137.0,359.6 1138.0,360.3 1139.0,359.9 1140.0,360.3 1141.0,358.9 1142.0,364.8 1143.0,359.3 1144.0,361.1 1145.0,357.8 1146.0,361.1 1147.0,357.2 1148.0,360.9 1149.0,359.0 1150.0,359.8 1151.0,358.2 1152.0,361.5 1153.0,358.5 1154.0,361.5 1155.0,358.7 1156.0,357.6 1157.0,358.6 1158.0,362.3 1159.0,359.3 1160.0,362.0 1161.0,358.4 1162.0,363.1 1163.0,359.8 1164.0,362.4 1165.0,360.7 1166.0,360.8 1167.0,358.6 1168.0,360.5 1169.0,359.3 1170.0,361.5 1171.0,360.1 1172.0,360.6 1173.0,357.5 1174.0,362.4 1175.0,358.7 1176.0,362.8 1177.0,358.8 1178.0,361.4 1179.0,360.1 1180.0,361.3 1181.0,358.8 1182.0,361.1 1183.0,356.8 1184.0,361.3 1185.0,359.7 1186.0,361.4 1187.0,357.4 1188.0,361.4 1189.0,353.8 1190.0,359.9 1191.0,358.7 1192.0,360.5 1193.0,357.5 1194.0,361.8 1195.0,358.4 1196.0,361.4 1197.0,358.9 1198.0,359.8 1199.0,359.9 1200.0,362.2 1201.0,362.3 1202.0,364.9 1203.0,364.7 1204.0,368.4 1205.0,366.5 1206.0,368.7 1207.0,369.0 1208.0,373.0 1209.0,372.9 1210.0,377.9 1211.0,378.9 1212.0,382.6 1213.0,382.1 1214.0,388.9 1215.0,389.3 1216.0,390.2 1217.0,387.0 1218.0,390.2 1219.0,387.9 1220.0,392.8 1221.0,387.6 1222.0,386.1 1223.0,380.2 1224.0,381.4 1225.0,375.8 1226.0,374.6 1227.0,373.2 1228.0,376.9 1229.0,372.8 1230.0,376.6 1231.0,372.4 1232.0,376.3 1233.0,373.4 1234.0,373.9 1235.0,372.4 1236.0,375.8 1237.0,372.0 1238.0,376.6 1239.0,372.2 1240.0,383.0 1241.0,380.2 1242.0,394.0 1243.0,386.0 1244.0,384.2 1245.0,374.8 1246.0,376.1 1247.0,373.3 1248.0,375.2 1249.0,373.5 1250.0,375.9 1251.0,371.8 1252.0,376.4 1253.0,372.0 1254.0,377.0 1255.0,372.9 1256.0,375.8 1257.0,372.9 1258.0,376.2 1259.0,373.3 1260.0,381.8 1261.0,385.6 1262.0,389.9 1263.0,384.2 1264.0,381.7 1265.0,374.9 1266.0,372.2 1267.0,373.8 1268.0,375.5 1269.0,373.2 1270.0,374.7 1271.0,371.5 1272.0,376.5 1273.0,371.2 1274.0,375.0 1275.0,371.9 1276.0,374.1 1277.0,373.3 1278.0,375.3 1279.0,373.4 1280.0,374.6 1281.0,380.6 1282.0,388.4 1283.0,390.1 1284.0,386.8 1285.0,379.7 1286.0,378.6 1287.0,373.0 1288.0,375.8 1289.0,373.1 1290.0,376.4 1291.0,372.8 1292.0,376.4 1293.0,373.7 1294.0,375.7 1295.0,374.7 1296.0,377.0 1297.0,373.8 1298.0,374.2 1299.0,372.2 1300.0,376.0 1301.0,372.0 1302.0,375.7 1303.0,382.4 1304.0,392.4 1305.0,389.4 1306.0,389.4 1307.0,382.6 1308.0,384.3 1309.0,379.4 1310.0,379.5 1311.0,373.8 1312.0,376.5"/><rect x="1086" y="276" width="76" height="190" fill="#00ff00" fill-opacity="0.58"/><rect x="1086" y="345" width="76" height="1.2" fill="#fff"/><rect x="1086" y="367" width="76" height="1.2" fill="#fff"/><text x="952.0" y="295.0" class="lb">Denver-3</text><text x="1298" y="295" class="lb" text-anchor="end">Denver</text><text x="1123" y="463" class="up" text-anchor="middle">Updated: 6 sec ago</text></svg>
<svg class="p" style="left:125px;top:480px" width="394" height="206" viewBox="125 480 394 206"><rect x="125" y="480" width="394" height="206" fill="#000"/><rect x="133" y="488" width="378" height="190" fill="#000"/><g stroke="#969696" stroke-width="1" stroke-dasharray="4 2" shape-rendering="crispEdges"><line x1="133.5" y1="488" x2="133.5" y2="679"/><line x1="171.5" y1="488" x2="171.5" y2="679"/><line x1="209.5" y1="488" x2="209.5" y2="679"/><line x1="246.5" y1="488" x2="246.5" y2="679"/><line x1="284.5" y1="488" x2="284.5" y2="679"/><line x1="322.5" y1="488" x2="322.5" y2="679"/><line x1="360.5" y1="488" x2="360.5" y2="679"/><line x1="398.5" y1="488" x2="398.5" y2="679"/><line x1="435.5" y1="488" x2="435.5" y2="679"/><line x1="473.5" y1="488" x2="473.5" y2="679"/><line x1="511.5" y1="488" x2="511.5" y2="679"/><line x1="133" y1="488.5" x2="512" y2="488.5"/><line x1="133" y1="507.5" x2="512" y2="507.5"/><line x1="133" y1="526.5" x2="512" y2="526.5"/><line x1="133" y1="545.5" x2="512" y2="545.5"/><line x1="133" y1="564.5" x2="512" y2="564.5"/><line x1="133" y1="583.5" x2="512" y2="583.5"/><line x1="133" y1="602.5" x2="512" y2="602.5"/><line x1="133" y1="621.5" x2="512" y2="621.5"/><line x1="133" y1="640.5" x2="512" y2="640.5"/><line x1="133" y1="659.5" x2="512" y2="659.5"/><line x1="133" y1="678.5" x2="512" y2="678.5"/></g><polyline fill="none" stroke="#ffff00" stroke-width="1" stroke-linejoin="bevel"  points="133.0,609.7 134.0,608.8 135.0,609.9 136.0,606.8 137.0,608.6 138.0,605.6 139.0,609.7 140.0,607.8 141.0,609.7 142.0,606.2 143.0,608.6 144.0,606.3 145.0,609.9 146.0,606.4 147.0,607.9 148.0,607.0 149.0,609.5 150.0,605.0 151.0,609.4 152.0,605.3 153.0,607.1 154.0,604.8 155.0,607.1 156.0,606.8 157.0,609.3 158.0,606.1 159.0,608.6 160.0,604.3 161.0,606.9 162.0,604.9 163.0,606.4 164.0,604.9 165.0,608.5 166.0,604.9 167.0,606.4 168.0,605.9 169.0,607.1 170.0,605.0 171.0,607.9 172.0,607.1 173.0,607.0 174.0,604.9 175.0,606.4 176.0,604.9 177.0,607.0 178.0,604.6 179.0,606.1 180.0,604.0 181.0,606.2 182.0,598.9 183.0,605.9 184.0,604.7 185.0,606.7 186.0,603.8 187.0,606.7 188.0,603.5 189.0,607.6 190.0,603.5 191.0,606.0 192.0,603.6 193.0,605.7 194.0,603.5 195.0,605.7 196.0,603.4 197.0,605.8 198.0,602.2 199.0,606.0 200.0,603.7 201.0,605.6 202.0,600.3 203.0,605.4 204.0,603.0 205.0,604.2 206.0,602.7 207.0,604.0 208.0,602.6 209.0,606.6 210.0,601.7 211.0,605.3 212.0,603.0 213.0,603.5 214.0,603.6 215.0,603.1 216.0,600.2 217.0,604.8 218.0,601.1 219.0,604.7 220.0,600.7 221.0,604.8 222.0,600.0 223.0,604.3 224.0,599.8 225.0,602.5 226.0,600.7 227.0,604.7 228.0,601.1 229.0,604.4 230.0,601.3 231.0,603.3 232.0,597.2 233.0,598.3 234.0,594.8 235.0,595.2 236.0,589.8 237.0,591.8 238.0,585.8 239.0,586.4 240.0,583.4 241.0,584.8 242.0,577.8 243.0,579.2 244.0,574.2 245.0,578.6 246.0,572.5 247.0,576.8 248.0,573.6 249.0,575.7 250.0,570.6 251.0,574.5 252.0,569.3 253.0,573.1 254.0,571.2 255.0,574.2 256.0,571.1 257.0,572.9 258.0,570.9 259.0,573.2 260.0,570.1 261.0,572.3 262.0,569.1 263.0,572.8 264.0,568.3 265.0,572.0 266.0,568.1 267.0,573.9 268.0,568.9 269.0,571.2 270.0,569.0 271.0,572.3 272.0,567.7 273.0,572.3 274.0,567.8 275.0,570.1 276.0,565.7 277.0,571.5 278.0,567.1 279.0,570.3 280.0,568.0 281.0,571.8 282.0,567.6 283.0,570.8 284.0,568.8 285.0,570.2 286.0,566.0 287.0,571.2 288.0,567.3 289.0,571.2 290.0,568.5 291.0,569.8 292.0,567.1 293.0,568.5 294.0,565.6 295.0,571.2 296.0,567.5 297.0,568.6 298.0,568.8 299.0,570.2 300.0,567.6 301.0,568.6 302.0,568.1 303.0,570.2 304.0,566.9 305.0,569.5 306.0,566.9 307.0,568.7 308.0,567.5 309.0,569.8 310.0,565.0 311.0,569.2 312.0,568.2 313.0,568.0 314.0,566.8 315.0,568.5 316.0,567.3 317.0,568.2 318.0,565.6 319.0,567.6 320.0,565.7 321.0,569.1 322.0,565.8 323.0,569.2 324.0,567.4 325.0,569.9 326.0,566.6 327.0,568.0 328.0,568.4 329.0,569.2 330.0,565.6 331.0,569.6 332.0,567.8 333.0,569.9 334.0,566.8 335.0,568.5 336.0,563.7 337.0,569.3 338.0,566.7 339.0,568.6 340.0,565.6 341.0,569.0 342.0,564.6 343.0,567.7 344.0,566.4 345.0,568.9 346.0,565.7 347.0,568.6 348.0,566.7 349.0,569.8 350.0,567.9 351.0,569.4 352.0,565.3 353.0,569.0 354.0,566.1 355.0,570.2 356.0,565.5 357.0,570.4 358.0,566.2 359.0,569.5 360.0,568.0 361.0,569.3 362.0,567.1 363.0,569.7 364.0,567.8 365.0,566.6 366.0,567.4 367.0,567.9 368.0,565.5 369.0,569.4 370.0,566.1 371.0,568.8 372.0,565.7 373.0,567.6 374.0,566.0 375.0,569.4 376.0,564.4 377.0,568.7 378.0,567.3 379.0,571.9 380.0,568.8 381.0,569.9 382.0,568.0 383.0,569.1 384.0,567.6 385.0,568.4 386.0,567.4 387.0,571.2 388.0,567.2 389.0,571.2 390.0,566.9 391.0,569.6 392.0,567.8 393.0,569.2 394.0,568.4 395.0,572.0 396.0,567.9 397.0,571.2 398.0,567.4 399.0,572.6 400.0,572.2 401.0,577.2 402.0,575.0 403.0,579.4 404.0,578.5 405.0,583.1 406.0,581.0 407.0,587.3 408.0,586.8 409.0,590.2 410.0,589.8 411.0,594.2 412.0,593.6 413.0,594.3 414.0,596.7 415.0,597.7 416.0,596.0 417.0,598.4 418.0,596.7 419.0,597.7 420.0,596.2 421.0,599.4 422.0,596.2 423.0,597.5 424.0,595.9 425.0,597.6 426.0,596.4 427.0,599.4 428.0,596.4 429.0,597.7 430.0,595.6 431.0,598.9 432.0,596.1 433.0,597.8 434.0,597.3 435.0,600.2 436.0,594.4 437.0,599.9 438.0,595.5 439.0,599.2 440.0,595.7 441.0,599.7 442.0,595.7 443.0,599.8 444.0,596.5 445.0,598.8 446.0,595.3 447.0,598.5 448.0,595.9 449.0,598.3 450.0,595.3 451.0,598.8 452.0,595.9 453.0,593.5 454.0,595.5 455.0,599.3 456.0,596.4 457.0,600.1 458.0,595.0 459.0,601.0 460.0,597.3 461.0,598.2 462.0,596.1 463.0,599.1 464.0,596.5 465.0,598.6 466.0,598.6 467.0,597.4 468.0,596.0 469.0,600.5 470.0,595.8 471.0,598.8 472.0,596.3 473.0,597.7 474.0,582.2 475.0,585.8 476.0,583.4 477.0,583.3 478.0,578.7 479.0,582.3 480.0,577.8 481.0,580.8 482.0,580.4 483.0,582.8 484.0,578.5 485.0,590.1 486.0,587.3 487.0,581.1 488.0,578.2 489.0,581.5 490.0,578.7 491.0,588.5 492.0,590.1 493.0,597.0 494.0,588.7 495.0,584.7 496.0,578.4 497.0,582.0 498.0,578.3 499.0,581.7 500.0,579.6 501.0,581.7 502.0,577.5 503.0,581.4 504.0,578.2 505.0,582.2 506.0,577.9 507.0,583.0 508.0,578.1 509.0,581.8 510.0,577.5 511.0,581.3"/><text x="151.0" y="507.0" class="lb">Denver-4</text><text x="497" y="507" class="lb" text-anchor="end">Denver</text><text x="322.5" y="675" class="up" text-anchor="middle">Updated: 5 sec ago</text></svg>
<svg class="p" style="left:525px;top:480px" width="395" height="206" viewBox="525 480 395 206"><rect x="525" y="480" width="395" height="206" fill="#000"/><rect x="533" y="488" width="379" height="190" fill="#000"/><g stroke="#969696" stroke-width="1" stroke-dasharray="4 2" shape-rendering="crispEdges"><line x1="533.5" y1="488" x2="533.5" y2="679"/><line x1="571.5" y1="488" x2="571.5" y2="679"/><line x1="609.5" y1="488" x2="609.5" y2="679"/><line x1="647.5" y1="488" x2="647.5" y2="679"/><line x1="685.5" y1="488" x2="685.5" y2="679"/><line x1="722.5" y1="488" x2="722.5" y2="679"/><line x1="760.5" y1="488" x2="760.5" y2="679"/><line x1="798.5" y1="488" x2="798.5" y2="679"/><line x1="836.5" y1="488" x2="836.5" y2="679"/><line x1="874.5" y1="488" x2="874.5" y2="679"/><line x1="912.5" y1="488" x2="912.5" y2="679"/><line x1="533" y1="488.5" x2="913" y2="488.5"/><line x1="533" y1="507.5" x2="913" y2="507.5"/><line x1="533" y1="526.5" x2="913" y2="526.5"/><line x1="533" y1="545.5" x2="913" y2="545.5"/><line x1="533" y1="564.5" x2="913" y2="564.5"/><line x1="533" y1="583.5" x2="913" y2="583.5"/><line x1="533" y1="602.5" x2="913" y2="602.5"/><line x1="533" y1="621.5" x2="913" y2="621.5"/><line x1="533" y1="640.5" x2="913" y2="640.5"/><line x1="533" y1="659.5" x2="913" y2="659.5"/><line x1="533" y1="678.5" x2="913" y2="678.5"/></g><polyline fill="none" stroke="#ffff00" stroke-width="1" stroke-linejoin="bevel"  points="533.0,612.4 534.0,610.8 535.0,614.6 536.0,610.9 537.0,611.5 538.0,610.8 539.0,612.8 540.0,612.0 541.0,615.4 542.0,612.6 543.0,615.0 544.0,611.4 545.0,614.9 546.0,613.9 547.0,616.2 548.0,613.3 549.0,616.1 550.0,612.7 551.0,617.1 552.0,612.9 553.0,616.9 554.0,613.7 555.0,615.2 556.0,610.3 557.0,617.0 558.0,614.5 559.0,618.3 560.0,614.4 561.0,618.8 562.0,615.8 563.0,618.4 564.0,615.4 565.0,618.9 566.0,616.4 567.0,619.8 568.0,617.1 569.0,618.9 570.0,616.3 571.0,618.1 572.0,615.6 573.0,619.9 574.0,615.3 575.0,621.4 576.0,615.9 577.0,618.1 578.0,616.0 579.0,619.4 580.0,616.1 581.0,619.7 582.0,615.4 583.0,617.7 584.0,614.3 585.0,617.9 586.0,617.0 587.0,617.9 588.0,613.7 589.0,619.8 590.0,613.6 591.0,619.3 592.0,609.9 593.0,616.7 594.0,614.2 595.0,615.6 596.0,613.3 597.0,616.4 598.0,612.9 599.0,613.6 600.0,612.3 601.0,614.8 602.0,611.0 603.0,614.6 604.0,609.8 605.0,613.9 606.0,611.4 607.0,612.9 608.0,609.9 609.0,611.5 610.0,609.1 611.0,613.2 612.0,611.3 613.0,612.7 614.0,608.2 615.0,611.9 616.0,608.5 617.0,610.9 618.0,609.8 619.0,610.8 620.0,607.3 621.0,612.1 622.0,608.4 623.0,610.9 624.0,609.4 625.0,610.6 626.0,607.3 627.0,609.8 628.0,606.4 629.0,609.5 630.0,606.6 631.0,609.7 632.0,607.0 633.0,609.5 634.0,606.4 635.0,611.8 636.0,605.9 637.0,608.4 638.0,605.9 639.0,607.7 640.0,604.6 641.0,607.3 642.0,602.2 643.0,603.0 644.0,599.7 645.0,601.3 646.0,598.3 647.0,598.9 648.0,594.6 649.0,596.9 650.0,592.4 651.0,593.7 652.0,589.9 653.0,591.9 654.0,584.7 655.0,590.3 656.0,583.7 657.0,586.7 658.0,582.4 659.0,582.7 660.0,579.5 661.0,581.1 662.0,577.6 663.0,577.5 664.0,574.8 665.0,577.3 666.0,574.8 667.0,576.4 668.0,572.2 669.0,575.3 670.0,573.4 671.0,576.4 672.0,571.5 673.0,575.1 674.0,572.4 675.0,575.5 676.0,571.5 677.0,576.0 678.0,572.8 679.0,574.8 680.0,569.2 681.0,574.7 682.0,571.9 683.0,573.8 684.0,570.7 685.0,575.1 686.0,572.3 687.0,573.6 688.0,571.9 689.0,575.2 690.0,569.4 691.0,574.5 692.0,569.8 693.0,573.4 694.0,571.1 695.0,573.4 696.0,571.2 697.0,572.2 698.0,567.2 699.0,573.2 700.0,568.8 701.0,573.2 702.0,571.2 703.0,573.3 704.0,571.4 705.0,574.9 706.0,570.0 707.0,574.3 708.0,570.6 709.0,571.2 710.0,568.3 711.0,573.1 712.0,569.9 713.0,573.0 714.0,567.6 715.0,573.7 716.0,569.4 717.0,572.8 718.0,570.1 719.0,573.2 720.0,571.5 721.0,572.6 722.0,570.1 723.0,567.9 724.0,570.5 725.0,572.1 726.0,569.5 727.0,571.0 728.0,568.9 729.0,573.0 730.0,570.4 731.0,572.3 732.0,570.7 733.0,572.2 734.0,569.4 735.0,572.4 736.0,570.9 737.0,572.7 738.0,569.7 739.0,572.1 740.0,569.1 741.0,572.2 742.0,570.2 743.0,573.3 744.0,569.4 745.0,574.5 746.0,569.2 747.0,572.7 748.0,569.8 749.0,571.9 750.0,570.7 751.0,572.3 752.0,568.5 753.0,571.0 754.0,569.9 755.0,573.4 756.0,569.5 757.0,575.2 758.0,570.6 759.0,572.5 760.0,571.7 761.0,574.4 762.0,571.3 763.0,573.1 764.0,570.9 765.0,573.9 766.0,570.0 767.0,572.1 768.0,569.0 769.0,574.1 770.0,570.4 771.0,575.4 772.0,570.0 773.0,571.2 774.0,570.6 775.0,573.6 776.0,571.7 777.0,573.9 778.0,570.4 779.0,573.1 780.0,570.1 781.0,573.7 782.0,572.5 783.0,575.2 784.0,572.0 785.0,577.1 786.0,574.1 787.0,578.4 788.0,577.0 789.0,580.5 790.0,578.4 791.0,581.9 792.0,580.4 793.0,582.1 794.0,580.0 795.0,585.9 796.0,584.4 797.0,590.8 798.0,587.2 799.0,591.1 800.0,591.2 801.0,595.2 802.0,593.4 803.0,597.8 804.0,597.9 805.0,600.7 806.0,598.1 807.0,601.9 808.0,596.3 809.0,598.1 810.0,595.4 811.0,597.0 812.0,592.5 813.0,593.6 814.0,589.7 815.0,591.1 816.0,589.2 817.0,589.0 818.0,586.3 819.0,588.8 820.0,584.2 821.0,588.8 822.0,587.1 823.0,587.4 824.0,585.7 825.0,588.3 826.0,586.2 827.0,589.7 828.0,585.4 829.0,593.1 830.0,593.6 831.0,587.2 832.0,586.0 833.0,587.2 834.0,586.6 835.0,588.2 836.0,585.2 837.0,587.4 838.0,585.4 839.0,588.9 840.0,584.4 841.0,587.8 842.0,585.0 843.0,588.4 844.0,586.1 845.0,588.5 846.0,586.0 847.0,589.0 848.0,585.2 849.0,586.6 850.0,583.0 851.0,586.5 852.0,585.2 853.0,586.5 854.0,584.6 855.0,586.8 856.0,582.5 857.0,586.2 858.0,582.2 859.0,585.9 860.0,581.5 861.0,585.9 862.0,582.3 863.0,587.3 864.0,581.6 865.0,585.8 866.0,581.3 867.0,585.8 868.0,582.2 869.0,587.0 870.0,582.4 871.0,584.5 872.0,582.3 873.0,585.1 874.0,583.0 875.0,587.6 876.0,584.1 877.0,586.2 878.0,582.4 879.0,587.9 880.0,603.7 881.0,593.2 882.0,591.8 883.0,595.0 884.0,591.9 885.0,596.8 886.0,594.1 887.0,599.7 888.0,596.8 889.0,599.5 890.0,598.9 891.0,601.6 892.0,601.4 893.0,604.2 894.0,601.8 895.0,604.3 896.0,600.4 897.0,602.2 898.0,597.5 899.0,598.6 900.0,595.4 901.0,597.4 902.0,593.3 903.0,596.8 904.0,591.8 905.0,591.5 906.0,590.2 907.0,591.0 908.0,584.6 909.0,588.2 910.0,585.0 911.0,585.5 912.0,581.9"/><rect x="664" y="488" width="116.5" height="190" fill="#b0c4de" fill-opacity="0.68"/><text x="551.5" y="507.0" class="lb">Denver-5</text><text x="898.5" y="507" class="lb" text-anchor="end">Denver</text><text x="722.5" y="675" class="up" text-anchor="middle">Updated: 4 sec ago</text></svg>
<svg class="p" style="left:926px;top:480px" width="394" height="206" viewBox="926 480 394 206"><rect x="926" y="480" width="394" height="206" fill="#990000"/><rect x="934" y="488" width="378" height="190" fill="#000"/><g stroke="#969696" stroke-width="1" stroke-dasharray="4 2" shape-rendering="crispEdges"><line x1="934.5" y1="488" x2="934.5" y2="679"/><line x1="972.5" y1="488" x2="972.5" y2="679"/><line x1="1010.5" y1="488" x2="1010.5" y2="679"/><line x1="1047.5" y1="488" x2="1047.5" y2="679"/><line x1="1085.5" y1="488" x2="1085.5" y2="679"/><line x1="1123.5" y1="488" x2="1123.5" y2="679"/><line x1="1161.5" y1="488" x2="1161.5" y2="679"/><line x1="1199.5" y1="488" x2="1199.5" y2="679"/><line x1="1236.5" y1="488" x2="1236.5" y2="679"/><line x1="1274.5" y1="488" x2="1274.5" y2="679"/><line x1="1312.5" y1="488" x2="1312.5" y2="679"/><line x1="934" y1="488.5" x2="1313" y2="488.5"/><line x1="934" y1="507.5" x2="1313" y2="507.5"/><line x1="934" y1="526.5" x2="1313" y2="526.5"/><line x1="934" y1="545.5" x2="1313" y2="545.5"/><line x1="934" y1="564.5" x2="1313" y2="564.5"/><line x1="934" y1="583.5" x2="1313" y2="583.5"/><line x1="934" y1="602.5" x2="1313" y2="602.5"/><line x1="934" y1="621.5" x2="1313" y2="621.5"/><line x1="934" y1="640.5" x2="1313" y2="640.5"/><line x1="934" y1="659.5" x2="1313" y2="659.5"/><line x1="934" y1="678.5" x2="1313" y2="678.5"/></g><polyline fill="none" stroke="#ffff00" stroke-width="1" stroke-linejoin="bevel"  points="934.0,598.8 935.0,596.4 936.0,600.2 937.0,595.2 938.0,598.7 939.0,596.5 940.0,599.6 941.0,596.5 942.0,598.7 943.0,596.8 944.0,598.5 945.0,595.0 946.0,601.3 947.0,592.3 948.0,600.2 949.0,597.5 950.0,599.3 951.0,595.4 952.0,599.7 953.0,596.2 954.0,598.1 955.0,596.5 956.0,597.7 957.0,594.5 958.0,597.4 959.0,595.0 960.0,598.1 961.0,594.8 962.0,598.8 963.0,594.8 964.0,597.6 965.0,594.8 966.0,594.3 967.0,590.7 968.0,592.1 969.0,586.6 970.0,590.4 971.0,584.7 972.0,586.9 973.0,582.9 974.0,585.4 975.0,579.9 976.0,583.9 977.0,578.8 978.0,580.5 979.0,578.0 980.0,579.0 981.0,575.8 982.0,576.2 983.0,572.2 984.0,576.6 985.0,573.3 986.0,572.7 987.0,572.7 988.0,573.1 989.0,571.5 990.0,574.7 991.0,569.8 992.0,573.6 993.0,569.8 994.0,572.2 995.0,568.5 996.0,570.6 997.0,569.4 998.0,572.6 999.0,569.6 1000.0,571.5 1001.0,565.9 1002.0,570.5 1003.0,567.3 1004.0,570.6 1005.0,568.1 1006.0,569.9 1007.0,567.2 1008.0,568.1 1009.0,567.1 1010.0,568.3 1011.0,567.3 1012.0,568.6 1013.0,567.6 1014.0,568.0 1015.0,565.4 1016.0,570.2 1017.0,564.9 1018.0,567.8 1019.0,566.8 1020.0,568.8 1021.0,565.4 1022.0,568.4 1023.0,566.6 1024.0,568.1 1025.0,566.6 1026.0,568.7 1027.0,564.6 1028.0,571.7 1029.0,565.5 1030.0,568.3 1031.0,564.6 1032.0,568.7 1033.0,564.7 1034.0,568.9 1035.0,566.3 1036.0,569.0 1037.0,567.3 1038.0,567.8 1039.0,565.4 1040.0,569.2 1041.0,565.8 1042.0,566.9 1043.0,565.4 1044.0,568.3 1045.0,565.7 1046.0,569.0 1047.0,564.9 1048.0,569.0 1049.0,566.6 1050.0,570.3 1051.0,565.9 1052.0,567.4 1053.0,566.2 1054.0,569.2 1055.0,564.5 1056.0,568.9 1057.0,565.4 1058.0,567.6 1059.0,566.4 1060.0,567.8 1061.0,565.7 1062.0,567.5 1063.0,564.6 1064.0,564.5 1065.0,566.1 1066.0,568.5 1067.0,565.3 1068.0,567.8 1069.0,565.9 1070.0,567.4 1071.0,565.7 1072.0,566.9 1073.0,566.2 1074.0,568.5 1075.0,564.9 1076.0,567.2 1077.0,565.8 1078.0,570.0 1079.0,566.6 1080.0,567.9 1081.0,566.5 1082.0,568.5 1083.0,566.5 1084.0,566.5 1085.0,566.5 1086.0,567.9 1087.0,566.5 1088.0,567.2 1089.0,566.5 1090.0,568.5 1091.0,566.5 1092.0,568.5 1093.0,566.5 1094.0,568.5 1095.0,566.5 1096.0,568.5 1097.0,566.5 1098.0,568.2 1099.0,566.5 1100.0,567.1 1101.0,566.5 1102.0,568.2 1103.0,566.5 1104.0,567.6 1105.0,566.5 1106.0,566.5 1107.0,566.5 1108.0,567.3 1109.0,566.5 1110.0,567.6 1111.0,566.5 1112.0,568.2 1113.0,565.8 1114.0,567.3 1115.0,564.9 1116.0,567.3 1117.0,563.3 1118.0,566.7 1119.0,563.8 1120.0,567.4 1121.0,563.6 1122.0,567.1 1123.0,564.7 1124.0,566.1 1125.0,565.7 1126.0,568.2 1127.0,565.3 1128.0,567.5 1129.0,564.6 1130.0,568.9 1131.0,563.8 1132.0,567.3 1133.0,564.3 1134.0,566.8 1135.0,564.9 1136.0,566.9 1137.0,563.8 1138.0,568.3 1139.0,565.7 1140.0,568.2 1141.0,565.4 1142.0,566.6 1143.0,564.5 1144.0,568.7 1145.0,563.9 1146.0,568.3 1147.0,564.2 1148.0,568.7 1149.0,563.9 1150.0,566.7 1151.0,565.3 1152.0,567.5 1153.0,563.7 1154.0,568.1 1155.0,564.4 1156.0,568.3 1157.0,563.7 1158.0,565.8 1159.0,566.2 1160.0,567.5 1161.0,562.9 1162.0,567.0 1163.0,563.9 1164.0,568.1 1165.0,564.8 1166.0,567.8 1167.0,565.5 1168.0,567.3 1169.0,564.9 1170.0,568.7 1171.0,563.0 1172.0,567.9 1173.0,564.5 1174.0,568.5 1175.0,565.4 1176.0,568.8 1177.0,565.1 1178.0,565.9 1179.0,564.1 1180.0,567.7 1181.0,563.1 1182.0,570.8 1183.0,565.4 1184.0,567.5 1185.0,564.2 1186.0,567.9 1187.0,566.0 1188.0,567.8 1189.0,562.8 1190.0,566.7 1191.0,563.8 1192.0,567.4 1193.0,565.3 1194.0,567.9 1195.0,564.8 1196.0,566.6 1197.0,564.5 1198.0,569.2 1199.0,565.2 1200.0,566.7 1201.0,565.7 1202.0,569.2 1203.0,565.5 1204.0,565.6 1205.0,564.9 1206.0,567.3 1207.0,566.1 1208.0,566.7 1209.0,564.7 1210.0,567.1 1211.0,566.3 1212.0,567.0 1213.0,564.7 1214.0,569.2 1215.0,566.0 1216.0,568.6 1217.0,566.1 1218.0,568.2 1219.0,564.7 1220.0,566.2 1221.0,565.4 1222.0,565.6 1223.0,565.5 1224.0,569.5 1225.0,565.3 1226.0,568.6 1227.0,566.2 1228.0,567.6 1229.0,565.7 1230.0,567.7 1231.0,563.8 1232.0,568.2 1233.0,563.8 1234.0,568.1 1235.0,564.0 1236.0,568.8 1237.0,566.8 1238.0,566.7 1239.0,564.2 1240.0,569.8 1241.0,564.4 1242.0,569.2 1243.0,564.7 1244.0,568.5 1245.0,564.9 1246.0,567.4 1247.0,566.9 1248.0,568.3 1249.0,566.3 1250.0,566.8 1251.0,565.2 1252.0,567.3 1253.0,564.3 1254.0,570.5 1255.0,566.4 1256.0,569.7 1257.0,569.3 1258.0,571.8 1259.0,570.1 1260.0,573.5 1261.0,572.7 1262.0,575.9 1263.0,570.4 1264.0,577.2 1265.0,573.8 1266.0,577.2 1267.0,575.5 1268.0,579.3 1269.0,577.7 1270.0,580.7 1271.0,579.7 1272.0,582.4 1273.0,581.2 1274.0,583.8 1275.0,582.3 1276.0,586.9 1277.0,583.3 1278.0,587.2 1279.0,584.4 1280.0,588.2 1281.0,586.0 1282.0,588.7 1283.0,587.5 1284.0,592.6 1285.0,588.4 1286.0,593.9 1287.0,591.2 1288.0,592.6 1289.0,588.4 1290.0,590.8 1291.0,586.3 1292.0,590.1 1293.0,585.5 1294.0,586.6 1295.0,582.8 1296.0,585.2 1297.0,579.8 1298.0,583.4 1299.0,582.9 1300.0,586.1 1301.0,575.2 1302.0,578.3 1303.0,575.4 1304.0,575.9 1305.0,573.7 1306.0,576.2 1307.0,573.2 1308.0,575.6 1309.0,573.5 1310.0,577.4 1311.0,572.2 1312.0,576.9"/><rect x="1079" y="488" width="32" height="190" fill="#ff0000" fill-opacity="0.6"/><g fill="#fff" shape-rendering="crispEdges"><rect x="1079" y="565" width="33" height="1"/><rect x="1079" y="569" width="33" height="1"/><rect x="1079" y="565" width="1" height="5"/><rect x="1111" y="565" width="1" height="5"/></g><text x="952.0" y="507.0" class="lb">Denver-7</text><text x="1298.6" y="507" class="lb" text-anchor="end">Denver</text><text x="1123" y="675" class="up" text-anchor="middle">Updated: 2 sec ago</text><text x="1003.4" y="638" class="wm1">Activate Windows</text><text x="1003.4" y="660" class="wm2">Go to System in Control Panel to activate</text><text x="1003.4" y="680" class="wm2">Windows.</text><rect x="1293" y="658" width="22" height="20" fill="#ffff00"/><text x="1294.6" y="670.2" class="akey">A</text></svg>
<div class="status" style="left:5.3px">08/27/2018 01:13:36 PM</div>
<div class="status" style="left:1260px">User: admin</div>
</body></html>
